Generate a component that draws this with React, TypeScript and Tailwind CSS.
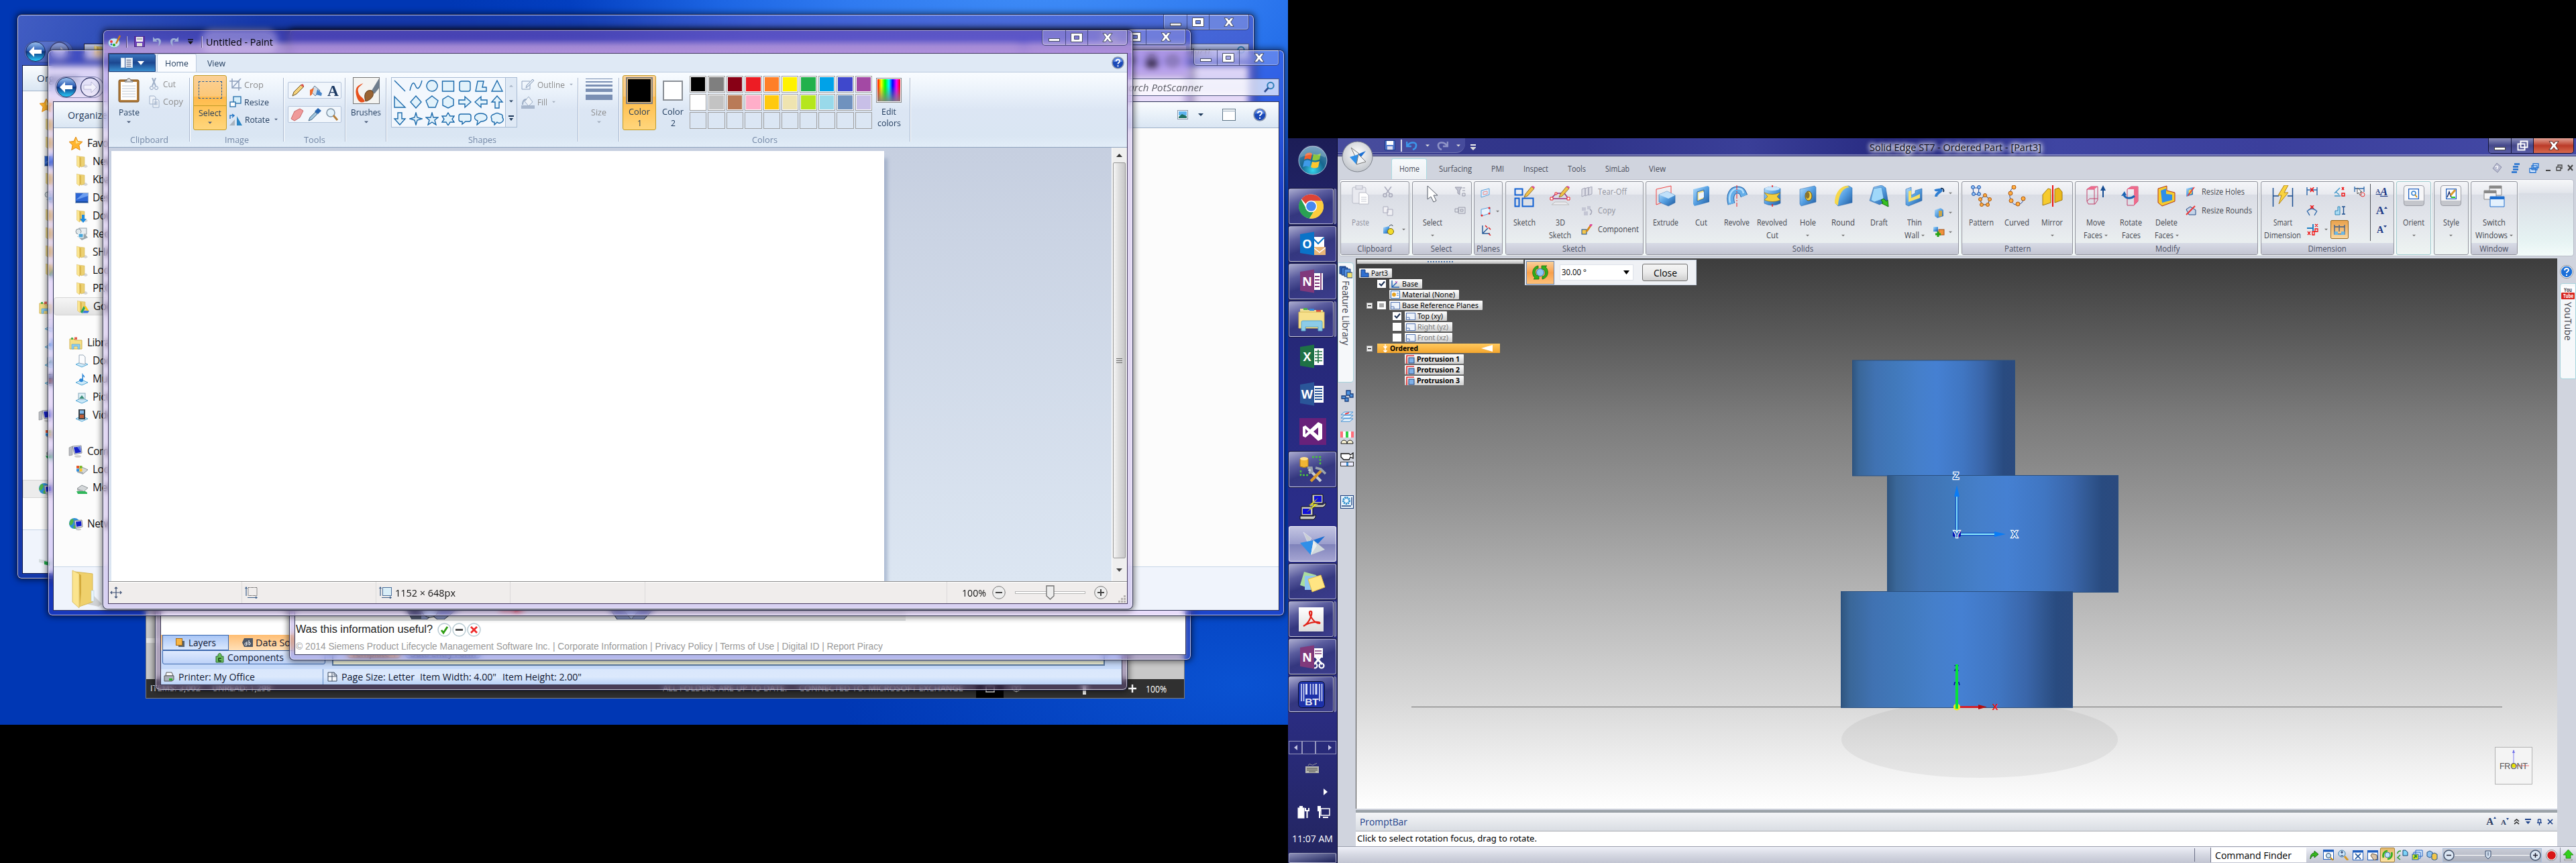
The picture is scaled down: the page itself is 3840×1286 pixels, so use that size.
import React, { useLayoutEffect, useRef, useState } from "react";

type Kids = { children?: React.ReactNode };

/* Text squeezed or stretched to a given advance width. */
function T({ w, c = "", children }: { w: number; c?: string } & Kids) {
  const ref = useRef<HTMLSpanElement>(null);
  const [s, setS] = useState(1);
  useLayoutEffect(() => {
    if (ref.current && ref.current.offsetWidth) {
      const r = ref.current.getBoundingClientRect();
      setS((v) => (w * v) / r.width);
    }
  }, [w]);
  return (
    <span className={"inline-block shrink-0 whitespace-nowrap " + c} style={{ width: w }}>
      <span ref={ref} className="inline-block origin-left" style={{ transform: `scaleX(${s})` }}>
        {children}
      </span>
    </span>
  );
}

function S({ w = 16, h, v, c = "", children }: { w?: number; h?: number; v?: string; c?: string } & Kids) {
  const hh = h ?? w;
  return (
    <svg width={w} height={hh} viewBox={v ?? `0 0 ${w} ${hh}`} className={"block shrink-0 " + c} fill="none">
      {children}
    </svg>
  );
}

const Tri = ({ f = "#4a5a78", w = 7, c = "" }: { f?: string; w?: number; c?: string }) => (
  <S w={w} h={4} v="0 0 8 4" c={c}><path d="M0 0h8L4 4z" fill={f} /></S>
);

/* ------------------------------------------------------------ caption buttons */
function Caption() {
  return (
    <div className="flex h-[23px] w-[128px] rounded-b-[5px] border border-t-0 border-[#1d2350]/70 bg-white/20 shadow-[inset_0_0_0_1px_rgba(255,255,255,0.35)]">
      <div className="flex w-[35px] items-end justify-center border-r border-[#1d2350]/60 pb-[5px]">
        <S w={17} h={5}><rect x=".5" y=".5" width="16" height="4" fill="#fff" stroke="#464c66" /></S>
      </div>
      <div className="flex w-[33px] items-center justify-center border-r border-[#1d2350]/60">
        <S w={18} h={14}><path d="M.5.5h17v13H.5zM5.500 4.500v5h7v-5z" fill="#fff" fillRule="evenodd" stroke="#464c66" /></S>
      </div>
      <div className="flex flex-1 items-center justify-center">
        <S w={16} h={14}><path d="M1 .7h4.500L8 4 10.500.7H15L10.700 6.800 15.200 13.300H10.700L8 9.600 5.300 13.300H.8L5.300 6.800z" fill="#fff" stroke="#464c66" /></S>
      </div>
    </div>
  );
}

function Win({ c, children }: { c: string } & Kids) {
  return (
    <div className={"absolute flex flex-col rounded-[7px] border border-[#14183a]/80 px-[7px] pb-[7px] shadow-[0_0_9px_2px_rgba(0,0,0,0.5),inset_0_0_0_1px_rgba(255,255,255,0.65)] backdrop-blur-[5px] " + c}>
      {children}
    </div>
  );
}

const NavBtns = () => (
  <div className="flex h-[32px] items-center gap-1 rounded-full border border-[#26306a]/50 bg-white/15 pr-1">
    <S w={32} h={32}>
      <defs><linearGradient id="nb" x1="0" y1="0" x2="0" y2="1"><stop offset="0" stopColor="#9fc4ef" /><stop offset=".45" stopColor="#2a5cb4" /><stop offset=".5" stopColor="#0c3380" /><stop offset="1" stopColor="#2bd3ff" /></linearGradient></defs>
      <circle cx="16" cy="16" r="14.500" fill="url(#nb)" stroke="#1b2a5c" />
      <path d="M6 16l8-8v5h11v6H14v5z" fill="#fff" />
    </S>
    <S w={31} h={32}>
      <circle cx="15.500" cy="16" r="14" fill="rgba(255,255,255,.3)" stroke="#3b4070" strokeWidth="1.300" />
      <path d="M25 16l-8-8v5H6v6h11v5z" fill="rgba(255,255,255,.55)" stroke="rgba(120,120,170,.4)" />
    </S>
  </div>
);

/* ------------------------------------------------------------ explorer icons */
const Folder = ({ w = 20, mark }: { w?: number; mark?: string }) => (
  <S w={w} h={w} v="0 0 20 20">
    <path d="M9 17l7 2 3-2-3-3z" fill="#bbb" opacity=".6" />
    <path d="M5 2l9 1v13l-5 2z" fill="#ecd072" stroke="#cfae4a" strokeWidth=".5" />
    <path d="M2.500 1l4 1.500v16.500l-4-3z" fill="#fbe590" stroke="#d9bd62" strokeWidth=".5" />
    <path d="M6.500 2.500L9 4v12l-2.500 3z" fill="#dcb84e" />
    {mark === "down" && <path d="M10 8h4v6h3l-5 6-5-6h3z" fill="#1e8be0" />}
    {mark === "drive" && <g><path d="M12 9l-5 9 2.500 2L14 12z" fill="#1fa463" /><path d="M12 9h3l5 8h-3.500z" fill="#fbc917" /><path d="M10 19.500L12 16h8l-2 3.500z" fill="#3a7ae0" /></g>}
  </S>
);
const Star = () => (
  <S w={22} h={22}><path d="M11 1l3 6.500 7 .8-5.200 5 1.400 7.200L11 17l-6.300 3.500 1.400-7.200L1 8.300l7-.8z" fill="#ffb52e" stroke="#e08a14" /><path d="M11 3l2 5 5 1-7 2z" fill="#ffe08a" /></S>
);
const DesktopI = () => (<S w={20} h={20}><rect x=".5" y="2.500" width="19" height="15" fill="#2d66d4" stroke="#9fb2cc" /><path d="M1 13L12 3h7v4z" fill="#6b9df0" /><rect x="1" y="15" width="18" height="2" fill="#184a9c" /></S>);
const RecentI = () => (<S w={20} h={20}><rect x="6" y="1" width="11" height="9" fill="#e8edf0" stroke="#93a0a8" /><circle cx="5" cy="6" r="4" fill="#dfe7ea" stroke="#8795a0" /><path d="M3 13l12-3 4 5-9 4z" fill="#9aa6ac" /><rect x="5" y="9" width="7" height="6" fill="#49a6d8" stroke="#fff" /></S>);
const LibI = () => (<S w={22} h={20}><path d="M2 4h6l2 2h10v13H2z" fill="#f6df86" stroke="#d0b14c" /><path d="M4 2h3v3H4z" fill="#4caf50" /><path d="M9 1.500h4V5H9z" fill="#e25c4c" /><path d="M5 19v-7h12v7h-3v-4H8v4z" fill="#8fcdf0" stroke="#4ba0d0" strokeWidth=".6" /></S>);
const Lib = ({ k }: { k: string }) => (
  <S w={20} h={20}>
    <path d="M1 15l9-4 9 4-9 4z" fill="#cbe8f8" stroke="#55a8d6" />
    {k === "doc" && <path d="M6 1h6l3 3v11l-9-2z" fill="#fbfcfe" stroke="#9aa9b8" />}
    {k === "mus" && <path d="M11 1c0 3 4 3 3 7-1-2-2-2-2-2v6a3 2.500 0 1 1-1.500-2.500V1z" fill="#2b86d6" />}
    {k === "pic" && <g><rect x="5" y="4" width="10" height="9" fill="#dff0f7" stroke="#86a9bb" /><path d="M6 12l4-5 4 5z" fill="#3c8f7a" /></g>}
    {k === "vid" && <g><rect x="5" y="1" width="10" height="15" fill="#3a434a" /><rect x="7" y="2.500" width="6" height="5" fill="#7fb6e8" /><rect x="7" y="9" width="6" height="5" fill="#c2603a" /></g>}
  </S>
);
const CompI = () => (<S w={22} h={20}><path d="M1 4l5-2v13l-5 1z" fill="#b9bcc2" stroke="#777" strokeWidth=".5" /><path d="M6 2l13-1 1 11-11 2z" fill="#dfe3ea" stroke="#8a8f99" /><path d="M8 3.500l10-1 .8 8.500L10 12.500z" fill="#1420c8" /><path d="M13 3l5-.5.8 8.500z" fill="#5d78e6" /><ellipse cx="14" cy="17" rx="5" ry="1.800" fill="#ccc" /></S>);
const NetI = () => (<S w={22} h={20}><circle cx="9" cy="9" r="8" fill="#2f8fd6" /><path d="M3 4c4-4 6 0 4 4s-4 5-6 2zM8 12c3-1 5 2 2 5-3 0-3-3-2-5z" fill="#4fb449" /><path d="M9 5l11-1 1 10-10 2z" fill="#e4e6ea" stroke="#888" /><path d="M11 6.500l8-1 .6 7L12 14z" fill="#1420c8" /><ellipse cx="15" cy="18" rx="4" ry="1.400" fill="#ccc" /></S>);
const DriveI = ({ net = false }: { net?: boolean }) => (<S w={20} h={18}><path d="M3 10l7-5 9 4-7 6z" fill="#d4d7d9" stroke="#8f9598" /><path d="M3 10l9 3v3l-9-3z" fill="#a7acae" />{net ? <path d="M2 14h13l3 2v2H4z" fill="#2fb65a" /> : <g><path d="M2 3h4v4H2z" fill="#e6572c" /><path d="M6.500 3h4v4h-4z" fill="#7cba2a" /><path d="M2 7.500h4v4H2z" fill="#2d8fe0" /><path d="M6.500 7.500h4v4h-4z" fill="#ffc221" /></g>}</S>);
const HelpI = ({ w = 20 }: { w?: number }) => (
  <S w={w} v="0 0 20 20"><circle cx="10" cy="10" r="9" fill="#1a49b8" stroke="#8c98ae" strokeWidth="1.600" /><path d="M3 9a7 7 0 0 1 14 0c-4-2-10-2-14 0z" fill="#5d8ae8" /><path d="M7 8c0-4 6-4 6-.5 0 2-3 2-3 4.500M10 14v2" stroke="#fff" strokeWidth="2" /></S>
);
const Mag = () => (<S w={18} h={18}><circle cx="11" cy="6.500" r="4.700" stroke="#2f7fb8" strokeWidth="2" /><path d="M7.500 10L2 16" stroke="#2e4f93" strokeWidth="2.600" /></S>);

function Tree() {
  const row = (icon: React.ReactNode, text: string, sub = true, sel = false) => (
    <div className={"flex h-[27px] items-center gap-1.5 rounded-sm " + (sub ? "pl-[32px] " : "pl-[22px] ") + (sel ? "border border-[#d5d5d5] bg-gradient-to-b from-[#f6f6f6] to-[#e2e2e2]" : "")}>
      {icon}<span className="w-[44px] overflow-hidden whitespace-nowrap tracking-[-0.5px]">{text}</span>
    </div>
  );
  return (
    <div className="flex w-[260px] flex-col pt-[9px] text-[15.500px] text-[#111]">
      {row(<Star />, "Favorites", false)}
      {row(<Folder />, "New folder")}
      {row(<Folder />, "Kbase")}
      {row(<DesktopI />, "Desktop")}
      {row(<Folder mark="down" />, "Downloads")}
      {row(<RecentI />, "Recent Places")}
      {row(<Folder />, "SHARED")}
      {row(<Folder />, "Local")}
      {row(<Folder />, "PROJECTS")}
      {row(<Folder mark="drive" />, "Google Drive", true, true)}
      <div className="h-[27px]" />
      {row(<LibI />, "Libraries", false)}
      {row(<Lib k="doc" />, "Documents")}
      {row(<Lib k="mus" />, "Music")}
      {row(<Lib k="pic" />, "Pictures")}
      {row(<Lib k="vid" />, "Videos")}
      <div className="h-[27px]" />
      {row(<CompI />, "Computer", false)}
      {row(<DriveI />, "Local Disk")}
      {row(<DriveI net />, "Media (M:)")}
      <div className="h-[27px]" />
      {row(<NetI />, "Network", false)}
    </div>
  );
}

/* ------------------------------------------------------------ background windows */
function Outlook() {
  return (
    <div className="absolute left-[217px] top-[600px] flex h-[441px] w-[1549px] flex-col border border-[#7c7c7c] bg-[#c8c8c8]">
      <div className="flex-1 pt-[350px]"><div className="h-[7px] bg-[#e4e4e4]" /></div>
      <div className="flex h-[28px] items-center bg-[#303030] font-['Open_Sans',sans-serif] text-[12px] text-white">
        <T w={75} c="ml-[6px]">ITEMS: 3,002</T>
        <T w={88} c="ml-[17px]">UNREAD: 1,298</T>
        <T w={185} c="ml-[584px]">ALL FOLDERS ARE UP TO DATE.</T>
        <T w={245} c="ml-[18px]">CONNECTED TO: MICROSOFT EXCHANGE</T>
        <div className="ml-[19px] flex h-full w-[41px] items-center justify-center bg-black"><S w={14} h={11}><rect x="1" y="1" width="12" height="9" stroke="#fff" strokeWidth="1.500" /></S></div>
        <S w={14} h={12} c="ml-[12px]"><path d="M1 1l6 3 6-3v7l-6 3-6-3zM7 4v7" stroke="#ddd" /></S>
        <div className="ml-[92px] h-[18px] w-[5px] bg-white" />
        <div className="h-px w-[58px] bg-[#888]" />
        <S w={12} h={12} c="ml-[5px]"><path d="M6 0v12M0 6h12" stroke="#fff" strokeWidth="2.400" /></S>
        <T w={31} c="ml-[14px] text-[14px]">100%</T>
      </div>
    </div>
  );
}

function BarTender() {
  return (
    <Win c="left-[231px] top-[500px] h-[529px] w-[1450px] bg-[rgba(120,90,160,0.35)]">
      <div className="mt-[7px] flex flex-1 flex-col border border-[#3a3550] bg-[#c6dafa] font-['Open_Sans',sans-serif] text-[15px] text-[#0e1530]">
        <div className="flex flex-1">
          <div className="flex w-[250px] flex-col bg-white">
            <div className="flex-1" />
            <div className="flex h-[23px] bg-gradient-to-b from-[#ffbe72] to-[#ffe0b8]">
              <div className="ml-[2px] flex w-[99px] items-center justify-center gap-[5px] border border-[#3b67ad] bg-gradient-to-b from-[#a9c6f6] to-[#dbe8fd]">
                <S w={14} h={14}><rect x="4" y="4" width="9" height="9" fill="#55626e" /><rect x=".5" y=".5" width="9" height="10" fill="#f7b544" stroke="#a76a15" /></S>
                <T w={41}>Layers</T>
              </div>
              <div className="flex items-center gap-[4px] pl-[20px]">
                <S w={16} h={13}><path d="M3 0h13v13H3L0 6.500z" fill="#4d5766" /><path d="M4 9c0-3 3-3 3 0s-3 2-3 0M7 5v5M10 3v7c3 0 3-4 0-4" stroke="#fff" /></S>
                <T w={52}>Data So</T>
              </div>
            </div>
            <div className="flex h-[28px] bg-[#c6dafa] pl-[2px]">
              <div className="flex h-[21px] w-[243px] items-center justify-center gap-[5px] rounded-b-[3px] border border-[#3b67ad] bg-gradient-to-b from-[#dfeafe] to-[#bdd2f8] pl-4">
                <S w={13} h={16}><path d="M1 6h3c-1-6 6-6 5 0h3v9H1z" fill="#69bd5e" stroke="#2b6d2a" /><path d="M9 9H5v4h4" stroke="#143a12" strokeWidth="1.500" /></S>
                <T w={84}>Components</T>
              </div>
            </div>
          </div>
          <div className="ml-[5px] mb-[5px] flex w-[1152px] flex-col border-b-2 border-l-2 border-r-2 border-[#5d7da5] bg-[#cfe0fb]">
            <div className="flex-1 bg-white" />
            <div className="flex h-[18px] pl-[20px] text-[13px] leading-[13px]">
              <div className="h-[14px] w-[81px] rounded-b-[6px] border border-[#3b67ad] bg-[#ffc98a] text-center">Template 1</div>
              <div className="ml-[6px] h-[14px] w-[113px] rounded-b-[6px] border border-[#3b67ad] bg-[#bcd2f8] text-center">Data Entry Form</div>
            </div>
            <div className="h-[5px] bg-[#f4f7df]" />
          </div>
        </div>
        <div className="flex h-[23px] items-center bg-gradient-to-b from-[#d9e7fc] via-[#dce9fc] to-[#b9d2f7]">
          <S w={16} h={15} c="ml-[4px]"><path d="M4 1h8l2 5H3z" fill="#fff" stroke="#555" /><path d="M1 6h14v6l-3 2H1z" fill="#aab2ba" stroke="#555" /><rect x="8" y="10" width="5" height="3" fill="#2cb02c" /></S>
          <T w={114} c="ml-[6px]">Printer: My Office</T>
          <div className="ml-[101px] h-full w-px bg-[#5c86c2]" />
          <S w={15} h={15} c="ml-[6px]"><path d="M1 1h9l4 4v9H1z" fill="#f4f7fb" stroke="#3b4b63" /><path d="M1 7h13M7 1v13M10 1v4h4" stroke="#3b4b63" /></S>
          <T w={109} c="ml-[6px]">Page Size: Letter</T>
          <T w={114} c="ml-[8px]">Item Width: 4.00"</T>
          <T w={118} c="ml-[9px]">Item Height: 2.00"</T>
        </div>
      </div>
    </Win>
  );
}

function ExplorerBack() {
  return (
    <Win c="left-[25px] top-[21px] h-[842px] w-[1845px] bg-[linear-gradient(115deg,rgba(110,120,205,0.6)_0px,rgba(60,60,150,0.35)_330px,rgba(60,60,150,0.35)_800px,rgba(90,80,190,0.5)_1000px)]">
      <div className="flex h-[75px] flex-col">
        <div className="flex justify-end"><Caption /></div>
        <div className="mt-[16px] flex items-center">
          <div className="ml-[3px]"><NavBtns /></div>
          <div className="ml-[16px] flex h-[25px] flex-1 items-center border border-[#223] bg-white/70 pl-3"><Folder /></div>
          <div className="ml-3 flex h-[25px] w-[330px] items-center justify-end gap-6 border border-[#223]/60 bg-white/60 pr-1 font-['Open_Sans',sans-serif] text-[15px] italic text-[#555]"><span>Search Producti...</span><Mag /></div>
        </div>
      </div>
      <div className="flex flex-1 flex-col overflow-hidden border border-[#0f1a4c] bg-[#fcfcfc] font-['Open_Sans',sans-serif]">
        <div className="flex h-[38px] items-center border-b border-[#a0b2c8] bg-gradient-to-b from-[#fafcfe] to-[#dae6f3] pl-[21px] text-[15px] text-[#1e395b]">Organize</div>
        <div className="flex h-[653px] flex-col overflow-hidden pt-[10px]">
          <div className="pl-[24px]"><Star /></div>
          <div className="flex flex-col gap-[7px] pl-[32px] pt-[8px]"><Folder /><Folder /><DesktopI /><Folder /><RecentI /><Folder /><Folder /><Folder /><Folder mark="drive" /></div>
          <div className="flex flex-col gap-[7px] pl-[23px] pt-[36px]"><LibI /></div>
          <div className="flex flex-col gap-[7px] pl-[32px] pt-[7px]"><Lib k="doc" /><Lib k="mus" /><Lib k="pic" /><Lib k="vid" /></div>
          <div className="pl-[23px] pt-[34px]"><CompI /></div>
          <div className="flex flex-col gap-[9px] pl-[32px] pt-[8px]"><DriveI /><DriveI net /></div>
          <div className="mt-[32px] flex h-[27px] shrink-0 items-center border border-[#d5d5d5] bg-[#ececec] pl-[22px]"><NetI /></div>
        </div>
        <div className="flex-1 border-t border-[#c5d5e8] bg-[#f0f4fc] pl-[24px] pt-[42px]"><S w={30} h={12}><path d="M0 1l30 6v5L0 6z" fill="#d5dde0" /><path d="M8 4l8 2v5l-8-2z" fill="#1fae4a" /></S></div>
      </div>
    </Win>
  );
}

function Browser() {
  return (
    <Win c="left-[431px] top-[43px] h-[941px] w-[1345px] bg-[rgba(95,60,190,0.24)]">
      <div className="flex h-[24px] justify-end"><Caption /></div>
      <div className="flex h-[45px] items-center justify-end gap-3 bg-[rgba(205,185,245,0.62)] pr-[10px]">
        <S w={14} h={8}><path d="M0 0h12L6 7z" fill="#444" /></S>
        <S w={18} h={20}><path d="M4 9V6a5 5 0 0 1 10 0v3" stroke="#333" strokeWidth="3" /><rect x="1" y="9" width="16" height="11" fill="#222" /></S>
        <S w={20} h={20}><circle cx="10" cy="10" r="7" stroke="#555" strokeWidth="3" /></S>
      </div>
      <div className="flex flex-1 flex-col border border-[#3a3d5c] bg-white font-['Liberation_Sans',sans-serif]">
        <div className="flex-1" />
        <div className="flex h-[26px] w-[910px] items-end border-b-2 border-[#dcdedf] bg-[#f1f1f1] pl-[155px]">
          <S w={100} h={26}><path d="M5 0l14 26h22l8-6 8 6h10L100 0z" fill="#8d9ac6" stroke="#222b3c" /><path d="M5 0l14 26h14V6z" fill="#555e74" /><circle cx="46" cy="10" r="13" fill="#c6dbf0" stroke="#333" /></S>
          <S w={40} h={22} c="ml-[50px]"><path d="M0 4h22V0l16 6-16 6V8H0z" fill="#ed1212" /></S>
          <S w={90} h={26} c="ml-[112px]"><path d="M5 0l18 26h40L86 0z" fill="#8d9ac6" stroke="#222b3c" /><path d="M22 0l22 26L66 0z" fill="#b2c4e8" stroke="#444" strokeWidth=".7" /></S>
        </div>
        <div className="flex h-[26px] items-center gap-[1px] pl-[1px]">
          <T w={204} c="mr-[6px] text-[16px] text-[#222]">Was this information useful?</T>
          {["M6 11l3 4 6-9", "M5 10.500h11", "M6 6l9 9M15 6l-9 9"].map((d, i) => (
            <S key={d} w={21} h={21}><circle cx="10.500" cy="10.500" r="9.500" fill="#fff" stroke="#b9cbd2" strokeWidth="1.500" /><path d={d} stroke={["#2e9d12", "#444", "#ee2a2a"][i]} strokeWidth="2.800" /></S>
          ))}
        </div>
        <div className="flex h-[24px] items-center pl-[1px] text-[14px] text-[#999]">
          <T w={875}>© 2014 Siemens Product Lifecycle Management Software Inc. | Corporate Information | Privacy Policy | Terms of Use | Digital ID | Report Piracy</T>
        </div>
      </div>
    </Win>
  );
}

function ExplorerFront() {
  return (
    <Win c="left-[71px] top-[74px] h-[844px] w-[1844px] bg-[rgba(125,60,225,0.18)]">
      <div className="flex h-[76px] flex-col">
        <div className="flex justify-end"><Caption /></div>
        <div className="mt-[16px] flex items-center">
          <div className="ml-[3px]"><NavBtns /></div>
          <div className="flex-1" />
          <div className="flex h-[26px] w-[280px] items-center justify-end border border-[#525a80] bg-white/70 pr-[5px] font-['Open_Sans',sans-serif] text-[15px] italic text-[#5d5d66]"><T w={126}>Search PotScanner</T><div className="w-[90px]" /><Mag /></div>
        </div>
      </div>
      <div className="flex flex-1 flex-col overflow-hidden border border-[#2b2f55] bg-[#fcfcfc] font-['Open_Sans',sans-serif]">
        <div className="flex h-[39px] items-center border-b border-[#a0b2c8] bg-gradient-to-b from-[#fafcfe] via-[#e9f1f9] to-[#dae6f3] pl-[21px] text-[15px] text-[#1e395b]">
          <T w={59}>Organize</T>
          <div className="flex-1" />
          <S w={16} h={14}><rect x=".5" y=".5" width="15" height="13" fill="#fff" stroke="#8796ab" /><rect x="2" y="2" width="12" height="6" fill="#5fb4f0" /><path d="M2 10l5-4 7 3v3H2z" fill="#1e6f62" /></S>
          <Tri f="#1e395b" w={8} c="ml-[15px]" />
          <S w={20} h={18} c="ml-[28px]"><rect x=".5" y=".5" width="19" height="17" fill="#fff" stroke="#5d7486" /><path d="M0 3.500h20" stroke="#8fa5b8" /></S>
          <div className="ml-[26px] mr-[18px]"><HelpI /></div>
        </div>
        <div className="h-[653px] overflow-hidden"><Tree /></div>
        <div className="flex-1 border-t border-[#c9d7e8] bg-[#f0f4fc] pl-[24px] pt-[3px]">
          <S w={48} h={60}><path d="M25 52l18 4 5-4-12-12z" fill="#bbb" opacity=".6" /><path d="M8 4l26 3v42l-20 7z" fill="#efd06c" stroke="#d7b855" /><path d="M4 2l10 5v51l-10-9z" fill="#fbe48e" stroke="#dcc069" /><path d="M14 7l3 2v27l-2 20z" fill="#d3aa3c" /><rect x="32" y="32" width="4" height="16" fill="#e8f4fb" stroke="#a8c5d8" strokeWidth=".5" /></S>
        </div>
      </div>
    </Win>
  );
}

/* ------------------------------------------------------------ Paint */
const shapes = [
  "M2 2l16 16", "M1 17C5 0 8 6 10 11S16 14 19 2", "M10 2a8 8 0 1 0 .1 0z", "M1.500 3h17v15h-17z", "M5 3h10q3 0 3 3v9q0 3-3 3H5q-3 0-3-3V6q0-3 3-3z", "M5 3h9l-2 9h6v6H2z", "M10 2l8 16H2z",
  "M2 2l16 16H2z", "M10 1l8 9-8 9-8-9z", "M10 1l9 7-4 10H5L1 8z", "M10 1l8 5v9l-8 4-8-4V6z", "M1 7h9V2l9 8-9 8v-5H1z", "M19 7h-9V2l-9 8 9 8v-5h9z", "M7 19v-9H2l8-9 8 9h-5v9z",
  "M7 1v9H2l8 9 8-9h-5V1z", "M10 1l2 7 7 2-7 2-2 7-2-7-7-2 7-2z", "M10 1l2 7h7l-5 4 2 7-6-4-6 4 2-7-5-4h7z", "M10 1l3 5h6l-3 4.500 3 4.500h-6l-3 5-3-5H1l3-4.500L1 6h6z", "M4 3h12q3 0 3 3v5q0 3-3 3h-5l-5 4v-4H4q-3 0-3-3V6q0-3 3-3z", "M10 2c12 0 12 12 0 12l-6 5 1-6C-3 10 0 2 10 2z", "M6 3q4-3 8 0 5 0 4 5 3 4-1 7-4 3-7 0l-4 4v-4q-5 0-4-5-3-5 4-7z",
];
const pal = ["#000000", "#7f7f7f", "#880015", "#ed1c24", "#ff7f27", "#fff200", "#22b14c", "#00a2e8", "#3f48cc", "#a349a4", "#ffffff", "#c3c3c3", "#b97a57", "#ffaec9", "#ffc90e", "#efe4b0", "#b5e61d", "#99d9ea", "#7092be", "#c8bfe7"];

function PGroup({ c, label, children }: { c: string; label: React.ReactNode } & Kids) {
  return (
    <div className={"relative flex h-full shrink-0 flex-col " + c}>
      <div className="flex h-[91px] pt-[4px]">{children}</div>
      <div className="flex h-[18px] items-center justify-center text-[13px] text-[#7286a4]">{label}</div>
      <div className="absolute right-0 top-[8px] h-[95px] w-px bg-[#a9b8cf] shadow-[1px_0_0_#fff]" />
    </div>
  );
}

function Paint() {
  return (
    <Win c="left-[153px] top-[44px] h-[864px] w-[1536px] bg-[rgba(120,70,205,0.2)]">
      <div className="-mx-[6px] flex h-[34px] shrink-0 items-start rounded-t-[6px] bg-[linear-gradient(180deg,rgba(90,70,165,0.35)_0%,rgba(110,85,190,0.3)_40%,rgba(190,155,230,0.55)_70%,rgba(185,150,225,0.6)_100%)] px-[6px]">
        <div className="flex h-[34px] items-center">
          <S w={20} h={20}><ellipse cx="9" cy="12" rx="8.500" ry="7" fill="#cfe6f6" stroke="#6f9ec4" /><circle cx="5" cy="10" r="2" fill="#e33" /><circle cx="9" cy="15" r="2" fill="#2a2" /><circle cx="5" cy="14" r="1.500" fill="#36c" /><path d="M18 1l-6 12" stroke="#c97b1d" strokeWidth="2.500" /></S>
          <div className="ml-[8px] h-[17px] w-px bg-white/60 shadow-[-1px_0_0_#4a3b70]" />
          <S w={16} h={16} c="ml-[10px]"><rect x=".5" y=".5" width="15" height="15" fill="#6a3fb5" stroke="#4b2a87" /><rect x="3" y="1" width="10" height="7" fill="#fff" /><path d="M4 3h8M4 5h8" stroke="#888" /><rect x="4" y="10" width="8" height="5" fill="#ddd" /></S>
          <S w={16} h={16} c="ml-[10px]"><path d="M2 1v7h7L6.500 6C10 4 12 7 10 15c6-5 5-13-2-12L5 4z" fill="#9fb0d6" /></S>
          <S w={16} h={16} c="ml-[10px]"><path d="M14 1v7H7l2.500-2C6 4 4 7 6 15 0 10 1 2 8 3l3 1z" fill="#9fb0d6" /></S>
          <S w={8} h={8} c="ml-[12px]"><path d="M0 1h8" stroke="#111" strokeWidth="1.500" /><path d="M0 3.500h8L4 8z" fill="#111" /></S>
          <div className="ml-[13px] h-[17px] w-px bg-white/60 shadow-[-1px_0_0_#4a3b70]" />
          <div className="ml-[5px] rounded-[10px] bg-[rgba(225,205,245,0.4)] shadow-[0_0_9px_7px_rgba(225,205,245,0.4)]">
            <T w={100} c="block font-['Open_Sans',sans-serif] text-[15px] leading-[20px] text-black">Untitled - Paint</T>
          </div>
        </div>
        <div className="flex-1" />
        <Caption />
      </div>
      <div className="flex flex-1 flex-col border border-[#453a60] bg-[#dfe9f5] font-['Open_Sans',sans-serif] text-[13px] leading-none text-[#1e395b]">
        <div className="flex h-[27px] shrink-0 items-end">
          <div className="flex h-[27px] w-[70px] items-center justify-center gap-[7px] rounded-tr-[3px] border border-[#1a3d7c] bg-gradient-to-b from-[#3d78c2] via-[#1c4790] to-[#3a8fd0]">
            <S w={18} h={15}><rect x=".5" y=".5" width="17" height="14" fill="#f4f8fd" stroke="#c7d5e8" /><path d="M6.500 0v15" stroke="#1c4790" /><path d="M8.500 3.500h7M8.500 6.500h7M8.500 9.500h7M8.500 12.500h7" stroke="#333f66" /></S>
            <S w={10} h={6}><path d="M0 0h10L5 6z" fill="#fff" /></S>
          </div>
          <div className="ml-[2px] flex h-[27px] w-[59px] items-center justify-center rounded-t-[3px] border border-b-0 border-[#bccbe0] bg-[#fafcff]"><T w={35}>Home</T></div>
          <div className="flex h-[25px] items-center pl-[16px]"><T w={27}>View</T></div>
          <div className="flex-1" />
          <div className="mb-[4px] mr-[4px]"><HelpI w={19} /></div>
        </div>
        <div className="flex h-[113px] shrink-0 border-b border-t border-b-[#8fa3bd] border-t-[#bccbe0] bg-[linear-gradient(180deg,#f9fcff_0%,#e9f1fa_28%,#dce6f4_50%,#dae6f3_85%,#e2edf8_100%)]">
          <PGroup c="w-[121px]" label={<T w={57}>Clipboard</T>}>
            <div className="flex w-[60px] flex-col items-center pt-[4px]">
              <S w={32} h={37}><rect x="1" y="3" width="30" height="33" rx="2" fill="#b07a38" stroke="#7a4f1c" /><rect x="4" y="6" width="24" height="27" fill="#fff" /><path d="M6 12h20M6 16h20M6 20h20M6 24h20M6 28h20" stroke="#bcc6d2" /><path d="M10 6V4h3c0-4 6-4 6 0h3v2z" fill="#ddd" stroke="#666" /></S>
              <T w={31} c="mt-[8px]">Paste</T><Tri c="mt-[6px]" w={6} />
            </div>
            <div className="flex flex-col gap-[8px] pt-[4px] text-[#8d8d8d]">
              <div className="flex items-center gap-[5px]"><S w={16} h={18}><path d="M5 0l5 12M10 0L5 12" stroke="#9fb0c8" strokeWidth="2" /><circle cx="4" cy="15" r="2.500" stroke="#8ea0bc" /><circle cx="11" cy="15" r="2.500" stroke="#8ea0bc" /></S><T w={19}>Cut</T></div>
              <div className="flex items-center gap-[5px]"><S w={16} h={19}><path d="M1 1h7l2 2v10H1zM6 6h7l2 2v10H6z" fill="#eef3fa" stroke="#9fb0c8" /><path d="M8 10h5M8 12h5M8 14h5" stroke="#9fb0c8" /></S><T w={30}>Copy</T></div>
            </div>
          </PGroup>
          <PGroup c="w-[140px]" label={<T w={36}>Image</T>}>
            <div className="ml-[5px] flex h-[82px] w-[50px] shrink-0 flex-col items-center rounded-[3px] border border-[#c29b29] bg-[linear-gradient(180deg,#fbd096_0%,#fcc878_38%,#ffb94d_39%,#ffc255_55%,#ffd67c_100%)]">
              <div className="mt-[8px] h-[26px] w-[35px] shrink-0 border border-dashed border-[#1c5a9c]" />
              <div className="mt-[10px] h-px w-full bg-[#c29b29]" />
              <T w={34} c="mt-[4px]">Select</T><Tri c="mt-[6px]" w={6} />
            </div>
            <div className="flex flex-col pl-[4px] pt-[1px]">
              <div className="flex h-[26px] items-center gap-[4px] text-[#8d8d8d]"><S w={18} h={18}><path d="M4 0v14h14M0 4h14v14M5 13L17 0" stroke="#8ea0bc" strokeWidth="1.500" /></S><T w={29}>Crop</T></div>
              <div className="flex h-[26px] items-center gap-[4px]"><S w={18} h={18}><rect x="6" y="1" width="11" height="10" fill="#d5edfa" stroke="#1f6ba8" strokeWidth="1.300" /><rect x="1" y="9" width="8" height="7" fill="#fff" stroke="#1f6ba8" strokeWidth="1.300" /></S><T w={37}>Resize</T></div>
              <div className="flex h-[26px] items-center gap-[4px]"><S w={19} h={19}><path d="M0 18h8V9z" fill="#a9b4bf" /><path d="M11 4v14h8z" fill="#2e86c4" /><path d="M1 8V3h5M4 1l3 2-3 3" stroke="#2576c4" strokeWidth="1.500" /></S><T w={37}>Rotate</T><Tri w={5} c="ml-[3px]" /></div>
            </div>
          </PGroup>
          <PGroup c="w-[92px]" label={<T w={32}>Tools</T>}>
            <div className="flex flex-col gap-[11px] pl-[6px] pt-[10px]">
              <div className="flex h-[25px] w-[80px] items-center justify-around rounded-[2px] border border-[#b5c4da] bg-[#f1f6fc]">
                <S w={20} h={20}><path d="M2 18l2-6L15 1l4 3L8 15z" fill="#f5d27b" stroke="#6c5524" /><path d="M14 2l4 3 1-3-2-2z" fill="#d9534f" /></S>
                <S w={20} h={20}><path d="M8 3l8 7-7 8-7-7z" fill="#d4dee8" stroke="#667c94" /><path d="M1 9l6-3-3 10-3 2z" fill="#ef6c2e" /><path d="M12 8l7 6-1 4-8-2z" fill="#4a86c8" /></S>
                <T w={17} c="font-['Liberation_Serif',serif] text-[24px] font-bold text-[#1d3a63]">A</T>
              </div>
              <div className="flex h-[25px] w-[80px] items-center justify-around rounded-[2px] border border-[#b5c4da] bg-[#f1f6fc]">
                <S w={20} h={20}><path d="M6 5l8-4 5 3-5 10-8 5-5-3z" fill="#ef9a9a" stroke="#c96a6a" /></S>
                <S w={20} h={20}><path d="M1 19l2-5 8-8 3 3-8 8z" fill="#9fc3dc" stroke="#4d6f8a" /><path d="M10 5l5-5 5 4-5 5z" fill="#2664b0" /></S>
                <S w={20} h={20}><circle cx="8" cy="7" r="6" fill="#e3f2fb" stroke="#7f93a5" strokeWidth="1.500" /><path d="M12 11l6 7" stroke="#b7813b" strokeWidth="3" /></S>
              </div>
            </div>
          </PGroup>
          <PGroup c="w-[61px]" label="">
            <div className="flex w-full flex-col items-center pt-[3px]">
              <S w={40} h={40}><rect x=".5" y=".5" width="39" height="39" fill="#f3f3f1" stroke="#777" /><path d="M6 30C0 10 14 12 16 8c-4 6-10 6-8 14 2 8 6 6 10 14-6 4-10 0-12-6z" fill="#e8501c" /><path d="M39 2L28 20l4 5 8-10z" fill="#6f7d8c" /><path d="M19 36c-4-12 2-18 9-16 6 5 0 14-9 16z" fill="#9a6332" stroke="#5b3a1a" /></S>
              <T w={45} c="mt-[6px]">Brushes</T><Tri c="mt-[6px]" w={6} />
            </div>
          </PGroup>
          <PGroup c="w-[286px]" label={<T w={42}>Shapes</T>}>
            <div className="ml-[7px] mt-[3px] flex h-[75px] border border-[#a9bcd4] bg-[#f2f7fd]">
              <div className="grid w-[169px] grid-cols-7 grid-rows-3 place-items-center">
                {shapes.map((d, i) => <S key={d} w={20} h={20}><path d={d} stroke="#1a69ab" strokeWidth="1.400" fill={i < 2 ? "none" : "#e2f2fb"} /></S>)}
              </div>
              <div className="flex w-[17px] flex-col items-center justify-around border-l border-[#a9bcd4] bg-[#dfe9f5]">
                <Tri w={6} f="#a8b5c6" c="rotate-180" /><Tri w={6} f="#1e395b" />
                <S w={8} h={8}><path d="M0 1h8" stroke="#1e395b" strokeWidth="2" /><path d="M1 4h6L4 8z" fill="#1e395b" /></S>
              </div>
            </div>
            <div className="flex flex-col pl-[6px] pt-[1px] text-[#8d8d8d]">
              <div className="flex h-[26px] items-center gap-[4px]"><S w={20} h={18}><path d="M1 4h12M1 4v12h12V9" stroke="#8fa2be" /><path d="M7 14l1-4 9-9 2 2-9 9z" fill="#dbe4ef" stroke="#8fa2be" /></S><T w={41}>Outline</T><Tri w={5} f="#a5b0c0" c="ml-[3px]" /></div>
              <div className="flex h-[26px] items-center gap-[4px]"><S w={20} h={19}><rect y="14" width="20" height="5" fill="#a8b7cd" /><path d="M5 8l6-7 6 8-6 6z" fill="#eef3f9" stroke="#9aabc3" /><path d="M2 13c0-6 2-8 6-8" stroke="#9aabc3" strokeWidth="2" /></S><T w={15}>Fill</T><Tri w={5} f="#a5b0c0" c="ml-[3px]" /></div>
            </div>
          </PGroup>
          <PGroup c="w-[61px]" label="">
            <div className="flex w-full flex-col items-center pt-[5px] text-[#8d8d8d]">
              <S w={40} h={33}><g fill="#7a8fb3"><rect width="40" height="1" /><rect y="4" width="40" height="2" /><rect y="9" width="40" height="3" /><rect y="15" width="40" height="5" /><rect y="24" width="40" height="8" /></g></S>
              <T w={23} c="mt-[11px]">Size</T><Tri c="mt-[6px]" w={6} f="#a5b0c0" />
            </div>
          </PGroup>
          <PGroup c="w-[434px]" label={<T w={38}>Colors</T>}>
            <div className="ml-[5px] flex h-[82px] w-[50px] shrink-0 flex-col items-center rounded-[3px] border border-[#c29b29] bg-[linear-gradient(180deg,#fbd096_0%,#fcc878_38%,#ffb94d_39%,#ffc255_55%,#ffd67c_100%)] leading-[17px]">
              <div className="mt-[2px] h-[40px] w-[40px] shrink-0 border-2 border-[#7e7e7e] bg-[#fbcf8b] p-px"><div className="h-full w-full bg-black" /></div>
              <T w={32} c="mt-[3px]">Color</T><T w={7}>1</T>
            </div>
            <div className="flex w-[50px] flex-col items-center leading-[17px]">
              <div className="mt-[8px] h-[30px] w-[30px] border-2 border-[#8a8f96] bg-white" />
              <T w={32} c="mt-[8px]">Color</T><T w={7}>2</T>
            </div>
            <div className="mt-[1px] grid h-[79px] w-[272px] grid-cols-10 grid-rows-3 gap-x-[2px] gap-y-[2px]">
              {Array.from({ length: 30 }, (_, i) => (
                <div key={i} className={"border border-[#a0a0a0] p-px " + (i < 20 ? "bg-white" : "bg-transparent")}>
                  {i < 20 && <div className="h-full w-full" style={{ background: pal[i] }} />}
                </div>
              ))}
            </div>
            <div className="ml-[2px] flex w-[46px] flex-col items-center leading-[17px]">
              <div className="mt-[4px] h-[37px] w-[38px] border border-[#888] bg-white p-px"><div className="h-full w-full bg-[linear-gradient(180deg,transparent_30%,rgba(128,128,128,0.9)_100%),linear-gradient(90deg,#f00,#ff0,#0f0,#0ff,#00f,#f0f,#f00)]" /></div>
              <T w={22} c="mt-[5px]">Edit</T><T w={35}>colors</T>
            </div>
          </PGroup>
        </div>
        <div className="flex flex-1 bg-gradient-to-b from-[#c6cfe0] to-[#dce6f2]">
          <div className="flex-1 pl-[4px] pt-[5px]"><div className="h-full w-[1152px] bg-white shadow-[7px_9px_5px_-2px_rgba(120,140,175,0.45)]" /></div>
          <div className="flex w-[23px] flex-col items-center border-l border-white bg-[#efefef] pr-px">
            <div className="flex h-[22px] items-center"><S w={9} h={5}><path d="M0 5h9L4.500 0z" fill="#333" /></S></div>
            <div className="flex w-[19px] flex-1 flex-col items-center justify-center gap-[2px] rounded-[2px] border border-[#979797] bg-gradient-to-r from-[#f6f6f6] via-[#dcdcdc] to-[#c6c6c8]"><div className="h-px w-[9px] bg-[#666]" /><div className="h-px w-[9px] bg-[#666]" /><div className="h-px w-[9px] bg-[#666]" /></div>
            <div className="flex h-[34px] items-center pt-px"><S w={9} h={5}><path d="M0 0h9L4.500 5z" fill="#444" /></S></div>
          </div>
        </div>
        <div className="flex h-[33px] shrink-0 items-center border-t border-[#8c8c8c] bg-[#f0edec] text-[15px] text-[#111] shadow-[inset_0_1px_0_#fff]">
          <div className="flex h-full w-[199px] items-center border-r border-[#dcdada] pl-[2px]"><S w={18} h={18}><path d="M9 1v16M1 9h16M7 3l2-2 2 2M7 15l2 2 2-2M3 7L1 9l2 2M15 7l2 2-2 2" stroke="#3d4f73" strokeWidth="1.200" /></S></div>
          <div className="flex h-full w-[200px] items-center border-r border-[#dcdada] pl-[4px]"><S w={20} h={18}><rect x="5" y="1.500" width="13" height="12" stroke="#333" strokeDasharray="1 1" /><path d="M2 1v13M4 16.500h14M.5 3L2 1l1.500 2M16 15l2 1.500-2 1.500" stroke="#3d5f8a" strokeWidth="1.200" /></S></div>
          <div className="flex h-full w-[200px] items-center border-r border-[#dcdada] pl-[4px]"><S w={20} h={18}><rect x="5.500" y="1.500" width="13" height="12" fill="#d9eef8" stroke="#4d6f9a" /><path d="M2 1v13M4 16.500h14M.5 3L2 1l1.500 2M16 15l2 1.500-2 1.500" stroke="#3d5f8a" strokeWidth="1.200" /></S><T w={90} c="ml-[4px]">1152 × 648px</T></div>
          <div className="h-full w-[201px] border-r border-[#dcdada]" />
          <div className="h-full w-[450px] border-r border-[#dcdada]" />
          <T w={36} c="ml-[22px]">100%</T>
          <S w={20} h={20} c="ml-[9px]"><circle cx="10" cy="10" r="9.300" fill="#eee" stroke="#777" /><path d="M5 10h10" stroke="#444" strokeWidth="2" /></S>
          <div className="relative ml-[14px] flex w-[105px] items-center justify-center">
            <div className="h-[4px] w-full border border-[#b5b5b5] bg-white" />
            <S w={13} h={22} c="absolute"><path d="M1 1h11v15l-5.500 5L1 16z" fill="#ededed" stroke="#707070" strokeWidth="1.300" /></S>
          </div>
          <S w={20} h={20} c="ml-[13px]"><circle cx="10" cy="10" r="9.300" fill="#eee" stroke="#777" /><path d="M5 10h10M10 5v10" stroke="#444" strokeWidth="2" /></S>
          <div className="flex-1" />
          <S w={12} h={12} c="mr-px self-end"><path d="M8 0h3v3H8zM4 4h3v3H4zM8 4h3v3H8zM0 8h3v3H0zM4 8h3v3H4zM8 8h3v3H8z" fill="#b8b4b2" /></S>
        </div>
      </div>
    </Win>
  );
}

/* ------------------------------------------------------------ taskbar */
const Office = ({ l, col, kind }: { l: string; col: string; kind: string }) => (
  <S w={38} h={36}>
    {kind === "note" && <g><rect x="20" y="6" width="14" height="25" fill="#fff" /><path d="M22 11h7M22 16h7M22 21h7M22 26h7M31 6v25" stroke={col} strokeWidth="1.800" /></g>}
    {kind === "grid" && <g><rect x="20" y="6" width="15" height="25" fill="#fff" /><path d="M22 11h11M22 15.500h11M22 20h11M22 24.500h11M27 8v20" stroke={col} strokeWidth="1.600" /></g>}
    {kind === "text" && <g><rect x="20" y="6" width="15" height="25" fill="#fff" /><path d="M22 10h11M22 14h11M22 18h11M22 22h11M22 26h11" stroke={col} strokeWidth="1.800" /></g>}
    {kind === "mail" && <g><path d="M20 8h16v16H20z" fill="#fff" /><path d="M20 11l7 7 9-9" stroke="#0a73c8" strokeWidth="2" /><path d="M20 23h18v12H20z" fill="#e8b577" /><path d="M20 24l9 7 9-7" stroke="#fff" strokeWidth="1.500" /></g>}
    {kind === "clip" && <g><path d="M20 5h14v14H20z" fill="#fff" /><path d="M22 9h10M22 13h10" stroke={col} strokeWidth="1.500" /><path d="M21 15l12 14M33 15L21 29" stroke="#fff" strokeWidth="3" /><circle cx="22" cy="31" r="3.500" stroke="#fff" strokeWidth="2.200" /><circle cx="32" cy="31" r="3.500" stroke="#fff" strokeWidth="2.200" /></g>}
    <path d="M0 4l21-3.500v35L0 32z" fill={col} />
    <text x="10.500" y="25" textAnchor="middle" fill="#fff" fontFamily="Open Sans" fontWeight="700" fontSize="18">{l}</text>
  </S>
);

function TBtn({ on = true, active = false, stack = false, children }: { on?: boolean; active?: boolean; stack?: boolean } & Kids) {
  const face = active
    ? "border border-white/80 bg-[linear-gradient(180deg,#c3c5e2_0%,#9a9dcc_50%,#7f82ba_51%,#a5a5d2_100%)]"
    : on ? "border border-white/50 bg-[linear-gradient(160deg,#a9aace_0%,#5a5c9e_30%,#34377f_55%,#3b3c8c_100%)] shadow-[0_0_0_1px_#14153f]" : "";
  return (
    <div className="flex h-[53px] w-full gap-px pl-px pr-px">
      <div className={"flex flex-1 items-center justify-center rounded-[3px] " + face}>{children}</div>
      {stack && <div className="w-[3px] rounded-r-[3px] border border-white/40 bg-[#4a4c90]" />}
    </div>
  );
}

function SEMark({ w = 40 }: { w?: number }) {
  return (
    <S w={w} h={w} v="0 0 40 40">
      <path d="M6 2l12 9-5 8z" fill="#c9ced4" stroke="#eef" strokeWidth=".5" />
      <path d="M1 18l20-4-4 22z" fill="#2f8fe8" /><path d="M20 14l18-6-12 13z" fill="#1a6fd4" />
      <path d="M21 14l17 14-21 8z" fill="#cfd8dc" /><path d="M21 14l5 8-9 14z" fill="#e9eef0" />
    </S>
  );
}

function Taskbar() {
  return (
    <div className="flex w-[74px] shrink-0 flex-col border-r border-[#0c0d2e] bg-[linear-gradient(180deg,#1c1d56_0%,#23256c_12%,#2a2d88_50%,#2a2c80_80%,#23255f_100%)]">
      <div className="flex h-[75px] justify-center pt-[11px]">
        <S w={44} h={44}>
          <defs><radialGradient id="orb" cx=".5" cy=".85" r=".8"><stop offset="0" stopColor="#35d6ee" /><stop offset=".5" stopColor="#17668f" /><stop offset="1" stopColor="#4f86ac" /></radialGradient></defs>
          <circle cx="22" cy="22" r="21" fill="url(#orb)" stroke="#a9c6dc" />
          <path d="M11 13c4-3 7-3 10-1l-2 9c-3-2-6-2-10 0z" fill="#f1602b" /><path d="M23 12.500c4 2 7 1 11-1l-2 9c-4 2-7 2-11 1z" fill="#8cc63e" />
          <path d="M9 23c4-2 7-2 10 0l-2 9c-3-2-6-2-10 0z" fill="#3f9be8" /><path d="M21 24c4 1 7 1 11-1l-2 9c-4 2-7 2-11 0z" fill="#fdc72e" />
          <path d="M3 18a19 19 0 0 1 38 0c-12-6-26-6-38 0z" fill="#fff" opacity=".22" />
        </S>
      </div>
      <div className="flex flex-col gap-[2.950px]">
        <TBtn stack><S w={37} h={37}><circle cx="18.500" cy="18.500" r="18" fill="#fff" /><path d="M18.500.5a18 18 0 0 1 16 10H18.500a8 8 0 0 0-7.500 5L4 7.500A18 18 0 0 1 18.500.5z" fill="#dd4437" /><path d="M3.500 8A18 18 0 0 0 16 36.500l7-11a8 8 0 0 1-12-4z" fill="#2aa053" /><path d="M35 10.500a18 18 0 0 1-19 26l8-13c2-3 2-7-1-13z" fill="#fccd3d" /><circle cx="18.500" cy="18.500" r="8" fill="#4688f1" stroke="#fff" strokeWidth="1.500" /></S></TBtn>
        <TBtn><Office l="O" col="#0a73c8" kind="mail" /></TBtn>
        <TBtn><Office l="N" col="#80397b" kind="note" /></TBtn>
        <TBtn stack><S w={40} h={38}><path d="M3 4h10l2 2h22v4H3z" fill="#f3df94" /><path d="M8 3h6v3H8z" fill="#4cb04c" /><path d="M17 4h7v3h-7z" fill="#3388dd" /><path d="M27 6h7v3h-7z" fill="#df4b3a" /><path d="M1 9h38v24H1z" fill="#f7e08b" stroke="#d6b854" /><path d="M5 37V24q0-2 2-2h27q2 0 2 2v13h-6v-6H11v6z" fill="#8ccbe8" stroke="#5ba6cb" /></S></TBtn>
        <TBtn on={false}><Office l="X" col="#1e7145" kind="grid" /></TBtn>
        <TBtn on={false}><Office l="W" col="#2a5699" kind="text" /></TBtn>
        <TBtn on={false}><S w={40} h={40}><rect width="40" height="40" fill="#68217a" /><path d="M5 13l4-2 7 6L28 6l6 3v22l-6 3-12-11-7 6-4-2zM9 16v8l4-4zM28 14l-7 6 7 6z" fill="#fff" fillRule="evenodd" /></S></TBtn>
        <TBtn><S w={40} h={40}><path d="M1 5v11q6 3 12 0V5z" fill="#f0b534" stroke="#b57d12" /><ellipse cx="7" cy="4.500" rx="6" ry="2.500" fill="#ffdf8a" /><path d="M19 2h12v12M2 22v7h12" stroke="#49c23c" strokeWidth="2.500" strokeDasharray="3 2" /><path d="M14 20l18 18" stroke="#c7ccd2" strokeWidth="4" /><path d="M33 22L17 38" stroke="#d99a2c" strokeWidth="4" /><path d="M24 18l8 2 7 7M12 18l6 0 1 6-5 2" stroke="#9aa3ad" strokeWidth="3.500" /></S></TBtn>
        <TBtn on={false}><S w={40} h={40}><path d="M19 2h16v13H19zM15 17h20l4-3v4l-4 3H15z" fill="#c8c8c0" stroke="#111" /><rect x="22" y="4" width="11" height="9" fill="#1010d8" /><path d="M3 20h17v13H3zM1 34h20l3-2v4l-3 3H1z" fill="#c8c8c0" stroke="#111" /><rect x="5" y="23" width="12" height="8" fill="#1010d8" /><path d="M28 7L14 18l8-1-11 11 17-12-8 0z" fill="#f4ee1c" stroke="#665" strokeWidth=".5" /></S></TBtn>
        <TBtn active><SEMark /></TBtn>
        <TBtn><S w={40} h={34}><path d="M7 2l18 5-6 21L1 22z" fill="#a9dd9f" /><path d="M8 8h18v21H8z" fill="#8fc5f2" /><path d="M13 13l19-6 6 18-19 7z" fill="#ffe583" stroke="#e3bd46" /></S></TBtn>
        <TBtn stack><div className="flex h-[36px] w-[37px] items-center justify-center bg-gradient-to-b from-white to-[#ddd] shadow-md"><S w={28} h={27}><path d="M2 24c10-5 16-24 10-22-4 2 5 18 14 18 3-3-12-4-24 4z" stroke="#e2231a" strokeWidth="2.200" /></S></div></TBtn>
        <TBtn><Office l="N" col="#80397b" kind="clip" /></TBtn>
        <TBtn stack><S w={40} h={40}><rect x=".5" y=".5" width="39" height="39" rx="5" fill="#1d31a8" stroke="#0a1030" /><path d="M5 4v26M8.500 4v26M32 4v26M35.500 4v26M18.500 4v16M22.500 4v16" stroke="#d8defa" strokeWidth="1.600" /><path d="M12.500 4v16M27 4v16" stroke="#d8defa" strokeWidth="3" /><text x="20.500" y="36" textAnchor="middle" fill="#e8eaf6" fontFamily="Liberation Sans" fontWeight="700" fontSize="15.500">BT</text></S></TBtn>
      </div>
      <div className="mt-[43px] flex h-[20px] px-px text-white/60">
        <div className="flex w-[20px] items-center justify-center border border-white/50"><S w={5} h={8}><path d="M5 0v8L0 4z" fill="#c4c5e4" /></S></div>
        <div className="w-[20px] border border-white/50" />
        <div className="flex flex-1 items-center justify-end border border-white/50 pr-[6px]"><S w={5} h={8}><path d="M0 0v8l5-4z" fill="#c4c5e4" /></S></div>
      </div>
      <S w={20} h={15} c="ml-[26px] mt-[13px]"><path d="M4 4c2-6 6 2 9-2 1-1 3 0 4-2" stroke="#999" /><rect y="5" width="20" height="10" fill="#b8b8b0" /><path d="M2 8h16M2 10.500h16M5 13h10" stroke="#444" /></S>
      <S w={6} h={10} c="ml-[53px] mt-[23px]"><path d="M0 0v10l6-5z" fill="#fff" /></S>
      <div className="mt-[16px] flex gap-[12px] pl-[14px]">
        <S w={18} h={19}><rect x="1" y="3" width="9" height="15" fill="#fff" stroke="#fff" /><rect x="3" width="5" height="3" fill="#fff" /><path d="M12 3v4h5V3M14.500 7v11" stroke="#fff" strokeWidth="2" /></S>
        <S w={19} h={18}><rect x="5" y="4" width="13" height="10" stroke="#fff" strokeWidth="1.500" /><rect x="0" y="0" width="5" height="8" fill="#fff" /><path d="M3 8v10M8 17h8" stroke="#fff" strokeWidth="2" /></S>
      </div>
      <T w={61} c="ml-[6px] mt-[18px] font-['Open_Sans',sans-serif] text-[15px] leading-[22px] text-white">11:07 AM</T>
      <div className="mx-px mt-auto h-[15px] rounded-[2px] border border-white/50 bg-gradient-to-br from-[#8d8fb8] to-[#1e2058]" />
    </div>
  );
}

/* ------------------------------------------------------------ Solid Edge */
function G({ c, label, children }: { c: string; label?: string } & Kids) {
  return (
    <div className={"flex h-[110px] shrink-0 flex-col overflow-hidden rounded-[3px] border border-[#8f929b] bg-[linear-gradient(180deg,#f4f5f8_0%,#e8eaef_17%,#dadde5_18%,#e4e7ec_60%,#eef4f2_100%)] shadow-[0_0_0_1px_#fafbfc] " + c}>
      <div className="flex flex-1">{children}</div>
      {label && <div className="-mx-[3px] flex h-[17px] items-center justify-center bg-gradient-to-b from-[#d8dbe6] to-[#c3c5d2] text-[12px] text-[#4a4f63]"><span className="scale-x-95">{label}</span></div>}
    </div>
  );
}
function B({ l1, w1, l2, w2, arrow, dim, c = "w-[53px]", children }: { l1: string; w1: number; l2?: string; w2?: number; arrow?: boolean; dim?: boolean; c?: string } & Kids) {
  return (
    <div className={"flex shrink-0 flex-col items-center pt-[3px] text-[12px] leading-[19px] " + (dim ? "text-[#8f919c] " : "text-[#43464e] ") + c}>
      <div className="flex h-[48px] items-start justify-center pt-[2px]">{children}</div>
      <T w={w1}>{l1}</T>
      <div className="flex h-[19px] items-center gap-[3px]">{l2 && <T w={w2 || 30}>{l2}</T>}{arrow && <Tri w={5} f="#777" />}</div>
    </div>
  );
}
const Sm = ({ children }: Kids) => <div className="flex h-[28px] items-center">{children}</div>;

const bf = "url(#seb)";

function Pencil({ x = 0, y = 0 }) {
  return <g transform={`translate(${x} ${y})`}><path d="M0 16l2-5L11 0l4 3L5 14z" fill="#f2c14a" stroke="#7a5a1a" strokeWidth=".8" /><path d="M11 0l4 3 1-2-3-2z" fill="#e0459a" /></g>;
}

function TreeChip({ icon, w, c = "text-black", children }: { icon: React.ReactNode; w: number; c?: string } & Kids) {
  return <div className={"flex h-[14px] items-center gap-[3px] rounded-[1px] bg-gradient-to-b from-white to-[#cfcfcf] pl-[2px] pr-[6px] text-[11px] leading-[14px] " + c}>{icon}<T w={w}>{children}</T></div>;
}
const Chk = ({ k = 0 }: { k?: number }) => <S w={13} h={12}><rect width="13" height="12" fill="#fff" />{k === 1 && <path d="M3 5.500l3 3 5-6" stroke="#1c2f52" strokeWidth="2" />}{k === 2 && <rect x="3" y="3" width="7" height="6" fill="#a8a8a8" />}</S>;
const Minus = () => <S w={9} h={9}><rect x=".5" y=".5" width="8" height="8" fill="#f4f4f4" stroke="#aaa" /><path d="M2 4.500h5" stroke="#222" strokeWidth="1.500" /></S>;
const PlaneI = () => <S w={14} h={12}><rect x=".5" y="1.500" width="13" height="10" fill="#eef3fb" stroke="#5576b4" /><path d="M1 8h4v3" stroke="#5576b4" /></S>;
const ProtI = () => <S w={13} h={13}><path d="M1 13V1h11" stroke="#e52b2b" strokeWidth="1.600" /><rect x="4" y="4" width="8" height="8" fill="#7fb0e6" stroke="#27467e" /></S>;

function Viewport() {
  return (
    <div className="relative flex-1 overflow-hidden border-l border-t border-[#4a4a4a] bg-[linear-gradient(180deg,#3d3d3d_0%,#5a5a5a_14%,#7b7b7b_29%,#969696_45%,#b3b3b3_60%,#d9d9d9_81%,#f0f0f0_92%,#ffffff_100%)]">
      <svg width="1790" height="820" viewBox="2022 386 1790 820" className="absolute left-0 top-0" fill="none">
        <defs>
          <linearGradient id="cyl" x1="0" x2="1" y1="0" y2="0"><stop offset="0" stopColor="#2f557f" /><stop offset=".04" stopColor="#3a6799" /><stop offset=".14" stopColor="#4072b2" /><stop offset=".26" stopColor="#4179bb" /><stop offset=".4" stopColor="#457fca" /><stop offset=".52" stopColor="#4580d2" /><stop offset=".68" stopColor="#4076c2" /><stop offset=".8" stopColor="#3a66aa" /><stop offset=".88" stopColor="#30568f" /><stop offset=".93" stopColor="#294b80" /><stop offset="1" stopColor="#2b4a7e" /></linearGradient>
        </defs>
        <clipPath id="fl"><rect x="2700" y="1054" width="500" height="120" /></clipPath>
        <ellipse cx="2951" cy="1102" rx="206" ry="57" fill="#000" opacity=".05" clipPath="url(#fl)" />
        <path d="M2104 1053.500H3730" stroke="#6e6e6e" />
        <rect x="2761.500" y="537" width="242" height="172" fill="url(#cyl)" stroke="#2a5080" />
        <rect x="2813.500" y="708.500" width="344" height="174" fill="url(#cyl)" stroke="#2a5080" />
        <rect x="2744.500" y="881.500" width="345" height="173" fill="url(#cyl)" stroke="#2a5080" />
        <path d="M2917 740v55M2917 796h58" stroke="#1657c8" strokeWidth="4.500" /><path d="M2917 740v55M2917 796h58" stroke="#8ff0ff" strokeWidth="1.800" />
        <path d="M2913 740l4-17 4 17zM2973 792l17 4-17 4z" fill="#0a7cf5" />
        <path d="M2911 792h12v7l-6 3-6-3z" fill="#0c14b0" />
        <g fontFamily="Liberation Sans" fontWeight="700" fontSize="14" fill="#2b6fc4" stroke="#fff" strokeWidth="2.400" paintOrder="stroke" textAnchor="middle">
          <text x="2915.500" y="714">Z</text><text x="3003" y="801">X</text><text x="2917" y="801">Y</text>
        </g>
        <text x="2916.500" y="1000" fontFamily="Liberation Sans" fontWeight="700" fontSize="12" fill="#0a10a0" textAnchor="middle">Z</text>
        <path d="M2913 1021l1-4h6l1 4" stroke="#0a10a0" strokeWidth="1.500" />
        <path d="M2921 1053.500h30" stroke="#ee1111" strokeWidth="2.500" /><path d="M2949 1050l13 3.500-13 3.500z" fill="#b40c0c" />
        <circle cx="2917" cy="1053.500" r="5" fill="#f5ea17" /><path d="M2917 990v66" stroke="#07e23a" strokeWidth="4" />
        <text x="2974" y="1058" fontFamily="Liberation Sans" fontWeight="700" fontSize="13" fill="#ee1111" textAnchor="middle">X</text>
        <rect x="3719.500" y="1113.500" width="55" height="55" fill="#f4f4f4" stroke="#b3b3b3" />
        <path d="M3747 1140v-22" stroke="#b9b9f4" strokeWidth="2" /><path d="M3745 1122l2-5 2 5z" fill="#7070e8" /><path d="M3750 1141h20" stroke="#f0b0b0" strokeWidth="2" />
        <circle cx="3747" cy="1141" r="3" fill="#e8e000" />
        <text x="3747" y="1145.500" fontFamily="Liberation Sans" fontSize="12.500" fill="#555" textAnchor="middle" textLength="42">FRONT</text>
      </svg>
      <div className="relative flex items-start">
        <div className="flex w-[251px] flex-col font-['Noto_Sans',sans-serif]">
          <div className="flex h-[8px] w-[250px] items-center justify-center border border-[#555] bg-gradient-to-b from-[#f2f2f2] to-[#b9b9b9]"><div className="h-[2px] w-[38px] border-t-2 border-dotted border-[#4a72a6]" /></div>
          <div className="flex flex-col gap-[2px] pt-[6px]">
            <div className="flex pl-[4px]"><TreeChip w={25} icon={<S w={13} h={12}><path d="M1 1h6v5h5v6H1z" fill="#2f6fd0" stroke="#123a80" /></S>}>Part3</TreeChip></div>
            <div className="flex items-center gap-[5px] pl-[31px]"><Chk k={1} /><TreeChip w={24} icon={<S w={14} h={12}><path d="M2 1v10h11M2 11l7-7" stroke="#2566b8" strokeWidth="1.500" /><path d="M7 2l3 3M10 2L7 5" stroke="#c03bb0" /></S>}>Base</TreeChip></div>
            <div className="flex pl-[49px]"><TreeChip w={79} icon={<S w={14} h={12}><rect x=".5" y=".5" width="13" height="11" fill="#fff" stroke="#2d6bb4" /><circle cx="5" cy="6" r="3" fill="#e6a323" /><path d="M9 4h3M9 7h3" stroke="#2d6bb4" /></S>}>Material (None)</TreeChip></div>
            <div className="flex items-center pl-[15px]"><Minus /><span className="w-[7px]" /><Chk k={2} /><span className="w-[5px]" /><TreeChip w={114} icon={<PlaneI />}>Base Reference Planes</TreeChip></div>
            <div className="flex items-center gap-[5px] pl-[54px]"><Chk k={1} /><TreeChip w={38} icon={<PlaneI />}>Top (xy)</TreeChip></div>
            <div className="flex items-center gap-[5px] pl-[54px]"><Chk /><TreeChip c="text-[#7c7c7c]" w={46} icon={<PlaneI />}>Right (yz)</TreeChip></div>
            <div className="flex items-center gap-[5px] pl-[54px]"><Chk /><TreeChip c="text-[#7c7c7c]" w={46} icon={<PlaneI />}>Front (xz)</TreeChip></div>
            <div className="flex items-center pl-[15px]"><Minus /><span className="w-[7px]" />
              <div className="flex h-[14px] w-[183px] items-center bg-gradient-to-b from-[#ffc95c] to-[#f4a62c] pl-[8px] text-[11px] font-bold leading-[14px] text-black"><S w={8} h={12}><path d="M4 0v5M1.500 3L4 6l2.500-3M4 6v5M1.500 9L4 12l2.500-3" stroke="#fff" strokeWidth="1.500" /></S><T w={42} c="ml-[3px]">Ordered</T><S w={17} h={10} c="ml-[94px]"><path d="M0 5l17-5v10z" fill="#fff" /></S></div>
            </div>
            {[1, 2, 3].map((n) => <div key={n} className="flex pl-[72px]"><TreeChip c="font-bold text-black" w={64} icon={<ProtI />}>{"Protrusion " + n}</TreeChip></div>)}
          </div>
        </div>
        <div className="mt-px flex h-[38px] w-[256px] items-center border border-[#c9d3e2] bg-[#eff1f5] font-['Open_Sans',sans-serif] text-[13px] text-black">
          <div className="ml-px flex h-[35px] w-[42px] items-center justify-center border border-[#6d86ad] bg-gradient-to-b from-[#f9cf98] via-[#f9a04a] to-[#fdc078]">
            <S w={26} h={24}><path d="M10 2C0 4 0 16 5 20l-2 2h8v-8l-3 3C4 13 5 6 10 6zM16 22c10-2 10-14 5-18l2-2h-8v8l3-3c4 4 3 11-2 11z" fill="#2fae1d" stroke="#17700c" strokeWidth=".8" /><circle cx="13" cy="12" r="5.500" fill="#8cc6f4" stroke="#3a78b8" /></S>
          </div>
          <div className="ml-[8px] flex h-[24px] w-[110px] items-center justify-between border border-[#dfe3ea] bg-white pl-[2px] pr-[5px]"><T w={37}>30.00 °</T><S w={9} h={6}><path d="M0 0h9L4.500 6z" fill="#000" /></S></div>
          <div className="ml-[13px] flex h-[26px] w-[68px] items-center justify-center rounded-[3px] border border-[#707070] bg-gradient-to-b from-[#f4f4f4] via-[#ebebeb] to-[#cfcfcf] text-[14px]"><T w={35}>Close</T></div>
        </div>
      </div>
    </div>
  );
}

function SolidEdge() {
  return (
    <div className="flex flex-1 flex-col bg-[#d0d4de] font-['Open_Sans',sans-serif]">
      <svg width="0" height="0" className="absolute"><defs><linearGradient id="seb" x1="0" y1="0" x2="1" y2="1"><stop offset="0" stopColor="#b4defc" /><stop offset=".5" stopColor="#559fe2" /><stop offset="1" stopColor="#1f5a9e" /></linearGradient></defs></svg>
      {/* title bar */}
      <div className="flex h-[27px] shrink-0 items-start border-b border-[#2a2c66] bg-[linear-gradient(90deg,#34388a_0%,#30348a_20%,#3a3f98_33%,#272a80_45%,#3f45a2_58%,#3b3f9c_75%,#444aa6_100%)] shadow-[inset_0_-2px_0_rgba(255,255,255,0.35)]">
        <div className="relative flex h-[22px] w-[190px] items-center rounded-br-[14px] border-b border-white/25 bg-[#5a5fae]/50 pl-[70px]">
          <S w={47} h={47} c="absolute left-[6px] top-[4px] z-10"><defs><radialGradient id="ob" cx=".5" cy=".4" r=".6"><stop offset="0" stopColor="#fff" /><stop offset="1" stopColor="#c2c6cc" /></radialGradient></defs><circle cx="23.500" cy="23.500" r="22.500" fill="url(#ob)" stroke="#7e838c" /><path d="M14 10l12 9-5 6z" fill="#f2f4f6" stroke="#777" /><path d="M12 24l13-4-3 15z" fill="#2f8fe8" /><path d="M24 20l12-5-8 10z" fill="#1a6fd4" /><path d="M25 20l11 11-14 4z" fill="#f2f4f6" stroke="#777" /></S>
          <S w={16} h={15}><rect x=".5" y=".5" width="15" height="14" fill="#4f78cc" stroke="#1b3a86" /><rect x="3" y="1" width="10" height="6" fill="#fff" /><rect x="4" y="9" width="8" height="5" fill="#dde" /></S>
          <div className="ml-[8px] h-[18px] w-[2px] bg-white/80" />
          <S w={17} h={14} c="ml-[6px]"><path d="M1 1v7h7M2 7C7 0 16 2 15 7c0 3-2 5-5 6" stroke="#3c96ea" strokeWidth="2.600" /></S>
          <Tri f="#ddd" w={6} c="ml-[12px]" />
          <S w={17} h={14} c="ml-[11px]"><path d="M16 1v7H9M15 7C10 0 1 2 2 7c0 3 2 5 5 6" stroke="#8e93c6" strokeWidth="2.600" /></S>
          <Tri f="#ddd" w={6} c="ml-[12px]" />
        </div>
        <S w={8} h={9} c="ml-[8px] mt-[9px]"><path d="M0 1h8" stroke="#eee" strokeWidth="2" /><path d="M0 4h8v1L4 9 0 5z" fill="#ddd" /></S>
        <div className="ml-[587px] flex h-[27px] items-center"><T w={256} c="text-[15px] text-[#080814] [text-shadow:0_0_6px_#fff,0_0_6px_#fff,0_0_9px_#fff,0_0_9px_#fff]">Solid Edge ST7 - Ordered Part - [Part3]</T></div>
        <div className="flex-1" />
        <div className="mr-[3px] flex h-[23px] w-[128px] overflow-hidden rounded-b-[5px] border border-t-0 border-[#15163c]">
          <div className="flex w-[34px] items-end justify-center border-r border-[#15163c] bg-gradient-to-b from-[#8a8db9] via-[#44478a] to-[#5a5ea8] pb-[4px]"><S w={17} h={5}><rect x=".5" y=".5" width="16" height="4" fill="#fff" stroke="#444" /></S></div>
          <div className="flex w-[33px] items-center justify-center border-r border-[#15163c] bg-gradient-to-b from-[#8a8db9] via-[#44478a] to-[#5a5ea8]"><S w={17} h={16}><path d="M5.500 1.500h10v9h-10zM1.500 5.500h10v9h-10z" stroke="#fff" strokeWidth="2" /></S></div>
          <div className="flex flex-1 items-center justify-center bg-gradient-to-b from-[#e0a095] via-[#bb3a28] to-[#d86a4e]"><S w={16} h={14}><path d="M1 .7h4.500L8 4 10.500.7H15L10.700 6.800 15.200 13.300H10.700L8 9.600 5.300 13.300H.8L5.300 6.800z" fill="#fff" stroke="#5a2a26" /></S></div>
        </div>
      </div>
      {/* tabs */}
      <div className="flex h-[34px] shrink-0 items-end text-[12px] text-[#4a4e5c]">
        <div className="ml-[80px] flex h-[31px] w-[53px] items-center justify-center rounded-t-[3px] border border-b-0 border-[#a9dbe2] bg-gradient-to-b from-[#f7fafc] to-[#eceff3]"><T w={30}>Home</T></div>
        <div className="flex h-[31px] items-center">
          <T w={49} c="ml-[18px]">Surfacing</T><T w={19} c="ml-[29px]">PMI</T><T w={37} c="ml-[29px]">Inspect</T><T w={27} c="ml-[29px]">Tools</T><T w={36} c="ml-[29px]">SimLab</T><T w={25} c="ml-[29px]">View</T>
        </div>
        <div className="flex-1" />
        <div className="mr-[4px] flex h-[34px] items-center">
          <S w={16} h={16}><path d="M8 1l7 6-6 8-7-6z" fill="#b8bbd0" stroke="#8b8ea8" /><path d="M6 7c1-3 5-1 3 1l-1 2" stroke="#fff" strokeWidth="1.300" /></S>
          <S w={14} h={15} c="ml-[13px]"><path d="M5 1.500h8M3 5.500h8M3 9.500h8M1 13.500h8" stroke="#1f6fd0" strokeWidth="2.600" /></S>
          <S w={15} h={15} c="ml-[13px]"><path d="M6 1h8v6H6zM4 4h8v6H4zM1 8h9v6H1z" fill="#e6f2ff" stroke="#1f6fd0" strokeWidth="1.300" /></S>
          <S w={7} h={10} c="ml-[10px]"><path d="M0 9h7" stroke="#444" strokeWidth="2" /></S>
          <S w={10} h={10} c="ml-[8px]"><path d="M3 3V1h6v5H7M1 4h6v5H1z" stroke="#444" strokeWidth="1.300" /></S>
          <S w={9} h={10} c="ml-[7px]"><path d="M1 1l7 8M8 1L1 9" stroke="#444" strokeWidth="2" /></S>
        </div>
      </div>
      {/* ribbon */}
      <div className="ml-[2px] mr-[3px] flex h-[115px] shrink-0 gap-[3.500px] rounded-[4px] border border-[#b8bcc8] bg-[linear-gradient(180deg,#f6f7f9_0%,#e2e5eb_17%,#d9dde5_18%,#e6f3f3_80%,#f3fbfa_100%)] pl-px pt-[2px]">
        <G c="w-[103px]" label="Clipboard">
          <B l1="Paste" w1={26} dim c="w-[58px]"><S w={28} h={30}><rect x="2" y="3" width="20" height="24" rx="2" fill="#e9eaf0" stroke="#b8bac6" /><rect x="7" width="10" height="6" fill="#e1e2ea" stroke="#b8bac6" /><path d="M12 11h10l4 4v13H12z" fill="#fff" stroke="#b8bac6" /><path d="M15 18h8M15 21h8M15 24h8" stroke="#c6c8d2" /></S></B>
          <div className="flex flex-col pl-[4px] pt-[1px]">
            <Sm><S w={16} h={17}><path d="M3 0l8 11M13 0L5 11" stroke="#a9aabb" strokeWidth="1.500" /><circle cx="3.500" cy="13" r="2.500" stroke="#a9aabb" strokeWidth="1.500" /><circle cx="12" cy="13" r="2.500" stroke="#a9aabb" strokeWidth="1.500" /></S></Sm>
            <Sm><S w={16} h={15}><path d="M1 1h7v9H1zM7 5h8v9H7z" fill="#f0f0f4" stroke="#a9aabb" /></S></Sm>
            <Sm><S w={18} h={16}><path d="M1 5l9-2v11H1z" fill={bf} /><circle cx="12" cy="11" r="4.500" fill="#f3dc2c" stroke="#7a6a0c" /><path d="M10 3c2-3 5-2 5 0" stroke="#234" /></S><Tri w={5} f="#777" c="ml-[11px]" /></Sm>
          </div>
        </G>
        <G c="w-[89px]" label="Select">
          <B l1="Select" w1={29} arrow c="w-[60px]"><S w={17} h={26}><path d="M1 1v20l5-4 4 8 4-2-4-8h6z" fill="#fff" stroke="#555b66" /></S></B>
          <div className="flex flex-col pl-[2px] pt-[1px]">
            <Sm><S w={17} h={16}><path d="M1 1h10L8 6v6l-3-2V6z" fill="#c2c4d2" stroke="#9799a8" /><path d="M12 2h4M12 6h4M12 10h4v4h-4z" stroke="#9799a8" /></S></Sm>
            <Sm><S w={17} h={12}><path d="M1 3h5v5H1zM6 1h10v9H6zM9 4h4v3H9z" stroke="#9799a8" /></S></Sm>
          </div>
        </G>
        <G c="w-[43px]" label="Planes">
          <div className="flex flex-col pl-[9px] pt-[2px]">
            <Sm><S w={14} h={15}><path d="M1 4l12-3v9L1 14z" fill="#dfeefc" stroke="#5d9fd8" /><path d="M4 6l6-1v4l-6 1z" stroke="#e88" /></S></Sm>
            <Sm><S w={15} h={15}><path d="M1 4l13-3v9L1 14z" fill="#e8f2fc" stroke="#5d9fd8" /><circle cx="13" cy="2" r="1.500" fill="#e22" /><circle cx="13" cy="10" r="1.500" fill="#e22" /><circle cx="2" cy="13" r="1.500" fill="#e22" /></S><Tri w={5} f="#777" c="ml-[8px]" /></Sm>
            <Sm><S w={16} h={16}><path d="M3 1v12h11M3 13L11 5" stroke="#2a5d9a" strokeWidth="1.500" /><path d="M7 1l3 3M12 4l3 3M12 13l3 3" stroke="#d22" strokeWidth="1.500" /></S></Sm>
          </div>
        </G>
        <G c="w-[206px]" label="Sketch">
          <B l1="Sketch" w1={33} c="w-[56px]"><S w={32} h={33}><path d="M1.500 5.500h11v9h-11zM1.500 19.500h6v12h-6zM12.500 19.500h16v12h-16z" stroke="#0f5fd2" strokeWidth="2" /><Pencil x={15} y={2} /></S></B>
          <B l1="3D" w1={14} l2="Sketch" w2={33} c="w-[50px]"><S w={32} h={32}><path d="M2 20L10 12h12l6 8z" stroke="#9a2f7e" strokeWidth="1.500" /><path d="M1 18h4v4H1zM26 18h4v4h-4zM8 11h3v3H8z" fill="#fff" stroke="#e22" /><path d="M3 29l5-4h16l5 4z" fill="#ececf0" stroke="#bbb" /><Pencil x={14} y={2} /></S></B>
          <div className="flex flex-col pl-[6px] pt-[1px] text-[12px] text-[#43464e]">
            <Sm><S w={17} h={16}><path d="M1 4l5-2v11l-5 2zM6 3l5-2v11l-5 2zM11 2l5-2v11l-5 2z" fill="#dcdde6" stroke="#a2a4b5" /></S><T w={43} c="ml-[8px] text-[#8f919c]">Tear-Off</T></Sm>
            <Sm><S w={17} h={16}><path d="M1 3h6v5H1zM9 1h5v5H9zM4 9h6v6H4z" fill="#c4c6d4" /><path d="M13 6c4 2 3 6 0 8" stroke="#a2a4b5" strokeWidth="1.500" /></S><T w={26} c="ml-[8px] text-[#8f919c]">Copy</T></Sm>
            <Sm><S w={17} h={16}><rect x="1" y="8" width="7" height="7" fill="#f4c64a" stroke="#1b4f94" /><path d="M8 11L15 1" stroke="#d58a1a" strokeWidth="3" /><path d="M13 3l3-3" stroke="#e0459a" strokeWidth="3" /></S><T w={61} c="ml-[8px]">Component</T></Sm>
          </div>
        </G>
        <G c="w-[467px] pl-[2px]" label="Solids">
          <B l1="Extrude" w1={38}><S w={32} h={32}><path d="M2 6l22-5v20L2 29z" stroke="#ee4444" /><path d="M6 14l12-5 12 6v11l-10 5-14-6z" fill={bf} stroke="#2a65a8" strokeWidth=".6" /><path d="M6 14l12-5 12 6-10 5z" fill="#bfe0fa" /></S></B>
          <B l1="Cut" w1={18}><S w={28} h={32}><path d="M2 6l22-5 2 2v22L4 31l-2-3z" fill={bf} /><path d="M8 10l10-3v13L8 24z" fill="#f7e28a" stroke="#2a65a8" /><path d="M10 12l8-2v8l-8 3z" fill="#eef6ff" /></S></B>
          <B l1="Revolve" w1={38}><S w={32} h={32}><path d="M8 28C4 14 10 7 17 7s8 4 10 9" stroke="#2a65a8" strokeWidth="11" /><path d="M8 28C4 14 10 7 17 7s8 4 10 9" stroke="#64aee8" strokeWidth="9" /><path d="M6 26C3 14 9 5 17 5s8 4 9 7" stroke="#b4defc" strokeWidth="2.500" /><path d="M16 0v32" stroke="#e22" strokeDasharray="7 2 2 2" /></S></B>
          <B l1="Revolved" w1={45} l2="Cut" w2={18}><S w={30} h={32}><path d="M3 5q12-6 24 0v22q-12 6-24 0z" fill={bf} stroke="#2a65a8" strokeWidth=".6" /><path d="M3 11q12 5 24 0l-5 6 5 5q-12 5-24 0l5-5z" fill="#f3cf3f" stroke="#8a6a12" strokeWidth=".6" /><ellipse cx="15" cy="5" rx="11" ry="3" fill="#cbe6fb" /><path d="M15 0v3M15 28v4" stroke="#e22" strokeWidth="1.500" /></S></B>
          <B l1="Hole" w1={24} arrow><S w={28} h={32}><path d="M2 6l22-5 2 2v22L4 31l-2-3z" fill={bf} stroke="#2a65a8" strokeWidth=".5" /><ellipse cx="15" cy="16" rx="5" ry="7" fill="#f3cf3f" stroke="#6a5210" /><ellipse cx="13.500" cy="15" rx="3" ry="5" fill="#8a7430" /></S></B>
          <B l1="Round" w1={35} arrow><S w={28} h={32}><path d="M2 27C2 10 12 1 22 1l5 3v22L6 31z" fill={bf} stroke="#2a65a8" strokeWidth=".5" /><path d="M1 27C1 12 9 1 20 1l3 2C12 4 7 14 6 30z" fill="#f7d84a" /></S></B>
          <B l1="Draft" w1={26}><S w={32} h={34}><path d="M8 3l12-3 6 4 3 18-12 7L2 23z" fill={bf} stroke="#2a65a8" strokeWidth=".6" /><path d="M8 5l12-2 3 17-14 5-5-3z" fill="#9fd8fa" stroke="#2a65a8" strokeWidth=".5" /><path d="M19 22l3 4-2 1 10 5-1-10-2 2-4-4z" fill="#37c023" stroke="#166f0c" /></S></B>
          <B l1="Thin" w1={22} l2="Wall" w2={22} arrow><S w={30} h={32}><path d="M2 6l8-3v12l6-3V8l10-3v18L6 31l-4-2z" fill={bf} stroke="#2a65a8" strokeWidth=".6" /><path d="M6 9v16l17-6v-6l-6 3-7 3V8z" fill="#f7e06a" /></S></B>
          <div className="flex flex-col pl-[2px] pt-[2px]">
            <div className="flex h-[29px] items-center"><S w={17} h={17}><path d="M3 3c1 3 4 0 8 1 3 2-7 4-7 10" stroke="#2f7ed2" strokeWidth="4" /><path d="M11 2c4-1 5 2 4 5" stroke="#16365e" strokeWidth="2" /></S><Tri w={5} f="#777" c="ml-[6px]" /></div>
            <div className="flex h-[29px] items-center"><S w={17} h={17}><path d="M2 5l9-3 4 3v9l-9 3-4-3z" fill={bf} /><path d="M8 6l5 0v8l-5 1z" fill="#caa64a" /></S><Tri w={5} f="#777" c="ml-[6px]" /></div>
            <div className="flex h-[29px] items-center"><S w={17} h={17}><rect x="0" y="1" width="7" height="7" fill={bf} /><rect x="8" y="5" width="8" height="8" fill="#f0913a" stroke="#a3501a" /><path d="M7 8v8M3 12h8" stroke="#25a516" strokeWidth="3" /></S><Tri w={5} f="#777" c="ml-[6px]" /></div>
          </div>
        </G>
        <G c="w-[166px] pl-[2px]" label="Pattern">
          <B l1="Pattern" w1={37}><S w={32} h={32}><path d="M4 4l9 0-1 10-7-1z" stroke="#2a4ea0" />{[[4, 3], [13, 3], [5, 13], [13, 13]].map(([x, y]) => <circle key={x + "-" + y} cx={x} cy={y} r="2.500" fill="#8fc1f5" stroke="#1b4fa8" />)}<path d="M22 15l7 6-3 8h-9l-2-8z" stroke="#333" />{[[22, 15], [29, 21], [26, 29], [17, 29], [15, 21]].map(([x, y]) => <circle key={x + "-" + y} cx={x} cy={y} r="2.500" fill="#ffae42" stroke="#a8540c" />)}</S></B>
          <B l1="Curved" w1={37}><S w={28} h={32}><path d="M10 2C-2 12 6 30 14 29s10-4 10-10" stroke="#2a4ea0" />{[[10, 3], [5, 12], [6, 23], [16, 28], [24, 20]].map(([x, y]) => <circle key={x + "-" + y} cx={x} cy={y} r="3" fill="#ffae42" stroke="#a8540c" />)}</S></B>
          <B l1="Mirror" w1={32} arrow><S w={32} h={32}><path d="M2 14L10 5l4 1v20L2 30z" fill="#f6cb2e" stroke="#a47a10" /><path d="M20 6l6-2 5 6v12l-11 4z" fill="#eab91c" stroke="#a47a10" /><path d="M17 0v32" stroke="#ee1111" strokeWidth="2" /></S></B>
        </G>
        <G c="w-[273px] pl-[3px]" label="Modify">
          <B l1="Move" w1={28} l2="Faces" w2={28} arrow><S w={30} h={32}><path d="M2 6l6-4h10v20l-4 6H4l-2-4 4-4h12M2 6h11v22M2 6v18" stroke="#c0406a" /><path d="M2 6l6-4h10l-5 4z" fill="#ee6a8c" /><path d="M26 18V6" stroke="#174d92" strokeWidth="2" /><path d="M22 8l4-8 4 8z" fill="#174d92" /></S></B>
          <B l1="Rotate" w1={33} l2="Faces" w2={28}><S w={30} h={32}><path d="M9 6l6-4h10v22l-6 6H9z" stroke="#c0406a" /><path d="M9 6l6-4h10l-6 4zM19 6l6-4v22l-6 6z" fill="#ee6a8c" /><path d="M4 15c4 6 11 5 16 1" stroke="#1b64b4" strokeWidth="3" /><path d="M0 16l8-1-3-6z" fill="#1b64b4" /></S></B>
          <B l1="Delete" w1={33} l2="Faces" w2={28} arrow><S w={30} h={32}><path d="M2 5l13-4v7l12 3v13L8 31l-6-5z" fill="#f6cb2e" stroke="#b0341c" /><path d="M6 8l8-3v8l9 1v8L8 26z" fill="#2f8fe8" /></S></B>
          <div className="flex flex-col pl-[2px] pt-[1px] text-[12px] text-[#43464e]">
            <Sm><S w={16} h={16}><path d="M1 3l10-2v11L1 15z" fill={bf} /><ellipse cx="7" cy="8" rx="2.500" ry="3.500" fill="#f7d84a" /><path d="M13 1L3 14" stroke="#e33" strokeWidth="1.500" /></S><T w={64} c="ml-[8px]">Resize Holes</T></Sm>
            <Sm><S w={16} h={16}><path d="M1 6l6-4 8 5v7H5z" fill="#c5d4e8" stroke="#234a86" /><path d="M14 1L1 14" stroke="#e33" strokeWidth="2" /></S><T w={75} c="ml-[8px]">Resize Rounds</T></Sm>
          </div>
        </G>
        <G c="w-[199px]" label="Dimension">
          <B l1="Smart" w1={28} l2="Dimension" w2={55} c="w-[64px]"><S w={32} h={32}><path d="M1.500 4v28M30.500 4v28M2 16h8M30 16h-7" stroke="#1c4f90" strokeWidth="1.500" /><path d="M18 0h6l-6 11h6L10 28l4-13H9z" fill="#f9d33e" stroke="#b5841a" /></S></B>
          <div className="flex w-[36px] flex-col pl-[3px] pt-[1px]">
            <Sm><S w={17} h={14}><path d="M1 0v12M16 0v12M1 4h15" stroke="#2a65a8" strokeWidth="1.400" /><path d="M6 1l5 6M11 0L6 7" stroke="#e11" strokeWidth="1.600" /></S></Sm>
            <Sm><S w={17} h={16}><path d="M1 8l4 7M16 8l-4 7M2 8q6-6 13 0" stroke="#2a65a8" strokeWidth="1.400" /><path d="M6 0l5 5M11 0L6 5" stroke="#e11" strokeWidth="1.600" /></S></Sm>
            <Sm><S w={19} h={18}><path d="M1 7h9M10 1v10" stroke="#1d7fc4" strokeWidth="2" /><path d="M13 1l4 4M17 1l-4 4M13 8h4v4h-4zM2 12l4 5M6 12l-4 5M9 12h3v5H9z" stroke="#e11" strokeWidth="1.300" /></S><Tri w={5} f="#777" c="ml-[8px]" /></Sm>
          </div>
          <div className="flex w-[34px] flex-col items-center pt-[1px]">
            <Sm><S w={17} h={16}><path d="M1 10l8-8M1 14h9M3 8l5 4" stroke="#3d95c8" strokeWidth="1.400" /><path d="M12 1l3 4M15 1l-3 4M12 10h4v4h-4z" stroke="#e11" strokeWidth="1.400" /></S></Sm>
            <Sm><S w={17} h={16}><path d="M2 14V8h4V2h3v12z" fill="#a9daf2" stroke="#2a85b8" /><path d="M12 2h5M12 13h5M14.500 2v11" stroke="#1c4f90" strokeWidth="1.400" /></S></Sm>
            <div className="flex h-[28px] w-[27px] items-center justify-center rounded-[2px] border border-[#9a6a22] bg-gradient-to-b from-[#e9a24c] to-[#fbd79c]"><S w={17} h={17}><path d="M1 1v14h15V1M1 4h6M8 4h8M8 1v10" stroke="#3a5b88" strokeWidth="1.300" /><path d="M1 11h5v4h5v-4h5v5H1z" fill="#6db8e4" /></S></div>
          </div>
          <div className="flex w-[28px] justify-start pl-[4px] pt-[1px]"><Sm><S w={17} h={16}><path d="M1 0v8M15 0v8M1 3h14" stroke="#2a65a8" strokeWidth="1.300" /><path d="M5 2v9l2-2 2 4 2-1-2-4h3z" fill="#fff" stroke="#333" strokeWidth=".8" /><circle cx="13" cy="12" r="3" stroke="#e33" /></S></Sm></div>
          <div className="mt-[3px] h-[85px] w-px bg-[#55585f]" />
          <div className="flex flex-1 flex-col items-center pt-[1px] font-['Liberation_Serif',serif] font-bold text-[#1e3a86]">
            <div className="flex h-[28px] items-center text-[17px] italic underline"><span className="text-[9px] not-italic">A</span>A</div>
            <div className="flex h-[28px] items-center text-[17px]">A<S w={5} h={12}><path d="M0 3l2.500-3L5 3z" fill="#1e3a86" /></S></div>
            <div className="flex h-[28px] items-center text-[14px]">A<S w={5} h={12}><path d="M0 0h5L2.500 3z" fill="#1e3a86" /></S></div>
          </div>
        </G>
        <G c="w-[52px] border-[#9cc9cc]"><B l1="Orient" w1={32} arrow c="w-full"><div className="flex h-[31px] w-[31px] flex-col items-center rounded-[4px] border border-[#9a9ca5] bg-[linear-gradient(180deg,#f6f6f8_74%,#c4c6cc_75%)] pt-[4px]"><S w={16} h={16}><rect x=".5" y=".5" width="15" height="15" fill="#fff" stroke="#1f5fc0" strokeWidth="1.500" /><circle cx="8" cy="7" r="3" stroke="#2f7fd2" strokeWidth="1.500" /><path d="M10 9l3 4" stroke="#c80" strokeWidth="1.500" /></S></div></B></G>
        <G c="w-[52px]"><B l1="Style" w1={24} arrow c="w-full"><div className="flex h-[31px] w-[31px] flex-col items-center rounded-[4px] border border-[#9a9ca5] bg-[linear-gradient(180deg,#f6f6f8_74%,#c4c6cc_75%)] pt-[4px]"><S w={16} h={16}><rect x=".5" y=".5" width="15" height="15" fill="#fff" stroke="#1f5fc0" strokeWidth="1.500" /><path d="M2 13l3-8 3 8" stroke="#1b2f6c" strokeWidth="1.500" /><path d="M7 10l7-8" stroke="#d99a2c" strokeWidth="3" /><path d="M8 13h6" stroke="#2c2" strokeWidth="2" /></S></div></B></G>
        <G c="w-[70px]" label="Window"><B l1="Switch" w1={34} l2="Windows" w2={48} arrow c="w-full"><S w={32} h={33}><path d="M9 1h18v14H9z" fill="#f4f4f6" stroke="#888" /><path d="M9 3h18" stroke="#888" strokeWidth="4" /><path d="M1 8h18v13H1z" fill="#f4f4f6" stroke="#888" /><path d="M1 10h18" stroke="#888" strokeWidth="4" /><path d="M10 17h21v15H10z" fill="#e4f1fd" stroke="#1f6fd0" /><path d="M10 19h21" stroke="#1f6fd0" strokeWidth="4" /></S></B></G>
      </div>
      {/* work area */}
      <div className="mt-[3px] flex flex-1">
        <div className="flex w-[27px] shrink-0 flex-col items-center">
          <div className="mt-[6px] flex h-[179px] w-[24px] flex-col items-center self-start rounded-r-[4px] border border-[#a7d3dc] bg-[#f6f8fa] pt-[4px]">
            <S w={20} h={19}><path d="M1 1h9v11H1z" fill="#2c63b8" stroke="#173b7a" /><path d="M4 3h9v11H4z" fill="#3d7bd2" stroke="#173b7a" /><path d="M8 5h9v11H8z" fill="#5a97e4" stroke="#173b7a" /><rect x="12" y="10" width="8" height="8" fill="#f0e070" stroke="#173b7a" /></S>
            <div className="mt-[3px] text-[14px] leading-[16px] tracking-[-0.2px] text-[#40424c] [writing-mode:vertical-rl]">Feature Library</div>
          </div>
          <S w={20} h={20} c="mt-[10px]"><path d="M9 2h6v5h4v5h-5v-3H9zM2 10h6v3h4v5H7v-4H2z" fill="#4e92de" stroke="#173b7a" strokeWidth="1.300" /></S>
          <S w={20} h={18} c="mt-[12px]"><path d="M1 6l5-4h13l-5 4zM1 11l5-4h13l-5 4zM1 16l5-4h13l-5 4z" fill="#f2f9ff" stroke="#3d8fd6" /><path d="M7 5l6-2" stroke="#e22" strokeWidth="1.500" /></S>
          <S w={20} h={19} c="mt-[13px]"><rect width="20" height="9" fill="#ff6d7a" /><rect x="4" width="4" height="9" fill="#fff" /><rect x="8" width="4" height="9" fill="#30d04a" /><rect x="12" width="4" height="9" fill="#fff" /><path d="M1 18a4.500 5 0 0 1 9 0zM10 18a4.500 5 0 0 1 9 0z" fill="#fff8d8" stroke="#111" /></S>
          <S w={20} h={21} c="mt-[12px]"><path d="M1 2h12l2 2 4-3v8l-4-2-2 4H5L1 7z" fill="#fff" stroke="#111" strokeWidth="1.300" /><rect x=".5" y="14.500" width="19" height="6" fill="#eef" stroke="#333" /><rect x="9" y="15" width="3" height="5" fill="#3d8fd6" /></S>
          <S w={20} h={20} c="mt-[43px]"><rect x=".5" y=".5" width="19" height="19" fill="#eaf5fc" stroke="#173b7a" /><circle cx="9" cy="8" r="4.500" stroke="#1c84c8" strokeWidth="3" strokeDasharray="2 1" /><path d="M2 16h14M17 3v12" stroke="#173b7a" strokeWidth="1.300" /></S>
        </div>
        <div className="flex w-[1791px] shrink-0 flex-col">
          <Viewport />
          <div className="mt-[2px] h-[4px] shrink-0 bg-[#9ba2a8]" />
          <div className="flex h-[28px] shrink-0 items-center border-b border-[#a9acb2] bg-gradient-to-b from-[#f4f5f7] to-[#d9dde3] pl-[6px] text-[15px] text-[#1c4189]">
            <T w={71}>PromptBar</T>
            <div className="flex-1" />
            <div className="mr-[6px] flex items-center gap-[7px]">
              <div className="flex items-start font-['Liberation_Serif',serif] font-bold leading-none text-[#2c3d63]"><span className="text-[15px]">A</span><S w={4} h={4}><path d="M0 3l2-3 2 3z" fill="#1c4189" /></S></div>
              <div className="flex items-end font-['Liberation_Serif',serif] font-bold leading-none text-[#2c3d63]"><span className="text-[11px]">A</span><S w={4} h={12}><path d="M0 0h4L2 3z" fill="#1c4189" /></S></div>
              <S w={9} h={9}><path d="M1 4l3.500-3L8 4M1 8l3.500-3L8 8" stroke="#222" strokeWidth="1.500" /></S>
              <S w={9} h={9} c="ml-[1px]"><path d="M0 1h9" stroke="#1c4189" strokeWidth="2" /><path d="M1 4h7L4.500 8z" fill="#1c4189" /></S>
              <S w={9} h={10} c="ml-[1px]"><path d="M2.500 1v5M6.500 1v5M1 6h7M4.500 6v4M2.500 1h4" stroke="#1c4189" strokeWidth="1.400" /></S>
              <S w={9} h={9}><path d="M1 1l7 7M8 1L1 8" stroke="#1c4189" strokeWidth="1.700" /></S>
            </div>
          </div>
          <div className="flex h-[22px] shrink-0 items-center bg-white pl-[2px] text-[13px] text-black"><T w={268} c="font-['Noto_Sans',sans-serif]">Click to select rotation focus, drag to rotate.</T></div>
        </div>
        <div className="flex w-[28px] flex-col items-center pt-[10px]">
          <S w={20} h={20}><circle cx="10" cy="10" r="9" fill="#1a6fd8" stroke="#fff" strokeWidth="1.400" /><circle cx="10" cy="10" r="9.600" stroke="#555" strokeWidth=".6" /><path d="M7 8c0-4 6-4 6-.5 0 2-3 2-3 4.500M10 14v2" stroke="#fff" strokeWidth="2" /></S>
          <div className="mt-[7px] flex h-[143px] w-[24px] flex-col items-center self-end rounded-l-[4px] border border-[#a7d3dc] bg-[#f6f8fa] pt-[4px] text-[#40424c]">
            <div className="flex w-[20px] flex-col items-center bg-white text-[8px] font-bold leading-[9px]"><T w={12}>You</T><div className="flex h-[10px] w-[20px] justify-center rounded-[1px] bg-[#d7261e] text-white"><T w={15}>Tube</T></div></div>
            <div className="mt-[4px] text-[14px] leading-[16px] [writing-mode:vertical-rl]">YouTube</div>
          </div>
        </div>
      </div>
      {/* status bar */}
      <div className="flex h-[25px] shrink-0 items-center border-t border-[#9a9eac] bg-gradient-to-b from-[#eef0f8] via-[#d5d8e2] to-[#c2c5d2]">
        <div className="ml-[1277px] h-[20px] w-px bg-[#6b6f86]" />
        <div className="ml-[23px] flex h-[22px] w-[143px] items-center border-l border-[#70748a] bg-white pl-[6px] text-[15px] text-black"><T w={114}>Command Finder</T></div>
        <div className="flex items-center">
          <div className="flex w-[22px] justify-center"><S w={13} h={14}><path d="M1 13c0-7 3-9 6-9V1l6 5-6 5V8C4 8 2 10 1 13z" fill="#35b81e" stroke="#166f0c" /></S></div>
          <div className="flex w-[22px] justify-center"><S w={17} h={16}><rect x=".5" y=".5" width="15" height="14" fill="#fff" stroke="#1f5fc0" /><path d="M0 2h16" stroke="#1f5fc0" strokeWidth="3" /><circle cx="8" cy="9" r="3.500" fill="#cfe8fb" stroke="#246" /><path d="M11 12l4 4" stroke="#c80" strokeWidth="2" /></S></div>
          <div className="flex w-[22px] justify-center"><S w={16} h={16}><circle cx="6" cy="6" r="5" fill="#cfe8fb" stroke="#37a" /><path d="M4 4h4M6 2v4M4 9h4" stroke="#125" /><path d="M10 10l5 6" stroke="#d59a2a" strokeWidth="3" /></S></div>
          <div className="flex w-[22px] justify-center"><S w={16} h={15}><rect x=".5" y=".5" width="15" height="14" fill="#fff" stroke="#1f5fc0" /><path d="M0 2h16" stroke="#1f5fc0" strokeWidth="3" /><path d="M4 5l8 8M12 5l-8 8" stroke="#124a94" strokeWidth="1.600" /></S></div>
          <div className="flex w-[22px] justify-center"><S w={16} h={15}><rect x=".5" y=".5" width="15" height="14" fill="#fff" stroke="#1f5fc0" /><path d="M0 2h16" stroke="#1f5fc0" strokeWidth="3" /><path d="M5 8l2-3 7 2 1 6-5 2z" fill="#d8c3a8" stroke="#654" /></S></div>
          <div className="flex h-[22px] w-[22px] items-center justify-center rounded-[2px] border border-[#a3803a] bg-gradient-to-b from-[#e5b86a] to-[#fce3a2]"><S w={16} h={16}><circle cx="8" cy="8" r="4" fill="#bfe3fa" stroke="#37a" /><path d="M2 12c-2-6 2-10 6-10M14 4c2 6-2 10-6 10" stroke="#2fae1d" strokeWidth="2.500" /></S></div>
          <div className="flex w-[22px] justify-center"><S w={17} h={16}><path d="M9 1h4l3 3v5H9z" fill="#7fd4f8" stroke="#147" /><path d="M5 8l-4 4 4 3M1 6c0-4 3-4 5-4" stroke="#2a9a2a" strokeWidth="1.500" /></S></div>
          <div className="flex w-[22px] justify-center"><S w={17} h={16}><path d="M6 1h10v9H6zM3 4h10v9H3z" fill="#d8ebfd" stroke="#1f5fc0" /><rect x="1" y="7" width="9" height="8" fill="#e2e41c" stroke="#1f5fc0" /><path d="M3 13l4-4M4 9h3v3" stroke="#183" strokeWidth="1.500" /></S></div>
          <div className="flex w-[22px] justify-center"><S w={17} h={16}><path d="M1 4l4-2 4 2v6l-4 2-4-2z" fill="#8cc0f0" stroke="#258" /><path d="M8 7l4-2 4 2v7l-4 2-4-2z" fill="#f2c64a" stroke="#258" /></S></div>
        </div>
        <div className="ml-[5px] flex h-[21px] w-[148px] items-center justify-between border border-[#a9bedb] bg-gradient-to-b from-[#c9ccd6] to-[#acb0bd]">
          <S w={17} h={17}><circle cx="8.500" cy="8.500" r="7.500" fill="#dbe6f3" stroke="#44546e" strokeWidth="1.400" /><path d="M5 8.500h7" stroke="#223" strokeWidth="1.500" /></S>
          <div className="h-px w-[45px] bg-white" />
          <S w={10} h={14}><path d="M1 1h8v8l-4 4-4-4z" fill="#cfdcec" stroke="#3a4d6c" /><path d="M5 3v5" stroke="#3a4d6c" /></S>
          <div className="h-px flex-1 bg-white" />
          <S w={17} h={17}><circle cx="8.500" cy="8.500" r="7.500" fill="#dbe6f3" stroke="#44546e" strokeWidth="1.400" /><path d="M5 8.500h7M8.500 5v7" stroke="#223" strokeWidth="1.500" /></S>
        </div>
        <div className="ml-[6px]"><S w={17} h={17}><circle cx="8.500" cy="8.500" r="7" fill="#d81414" stroke="#f2f2f2" strokeWidth="1.400" /><circle cx="8.500" cy="8.500" r="8" stroke="#666" strokeWidth=".7" /></S></div>
        <div className="ml-[4px] h-[22px] w-px bg-[#8d91a2]" />
        <S w={15} h={17} c="ml-[4px]"><path d="M7.500 0L15 8h-4v5H4V8H0z" fill="#31d01b" stroke="#1a7a0e" strokeWidth=".7" /><rect x="2" y="14.500" width="11" height="2" fill="#fff" stroke="#444" strokeWidth=".5" /></S>
      </div>
    </div>
  );
}

export default function App() {
  return (
    <div className="flex h-[1286px] w-[3840px] items-start overflow-hidden bg-black">
      <div className="relative h-[1080px] w-[1920px] shrink-0 overflow-hidden bg-[#0037b4] bg-[radial-gradient(ellipse_900px_520px_at_1560px_-60px,#4290f8_0%,#2f7af0_35%,#1d66e4_55%,rgba(5,68,200,0.6)_80%,rgba(0,56,182,0)_100%),radial-gradient(ellipse_600px_260px_at_1850px_1020px,#0a52d2_0%,rgba(0,56,182,0)_100%)]">
        <Outlook />
        <BarTender />
        <ExplorerBack />
        <Browser />
        <ExplorerFront />
        <Paint />
      </div>
      <div className="mt-[206px] flex h-[1080px] w-[1920px] shrink-0">
        <Taskbar />
        <SolidEdge />
      </div>
    </div>
  );
}
